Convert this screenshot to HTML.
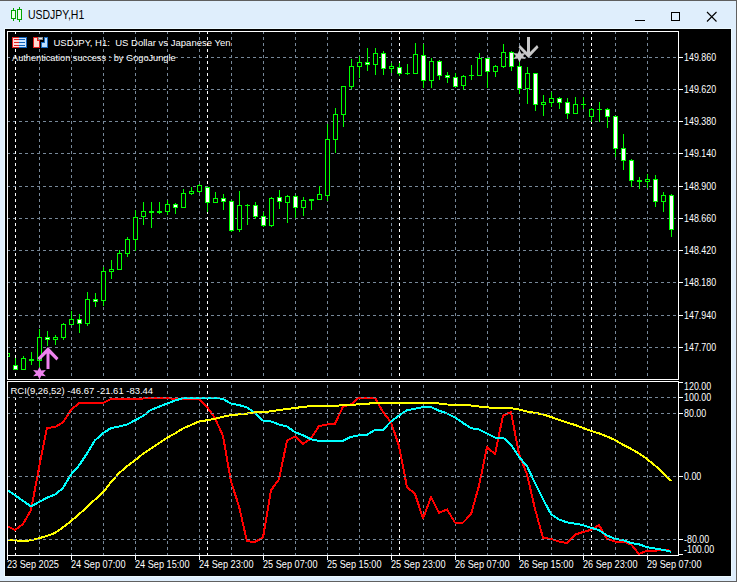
<!DOCTYPE html>
<html><head><meta charset="utf-8"><style>
html,body{margin:0;padding:0;}
body{width:737px;height:582px;overflow:hidden;background:#dfeefc;position:relative;font-family:"Liberation Sans",sans-serif;}
#tb{position:absolute;left:0;top:0;width:737px;height:1px;background:#5e5e5e;}
#rb{position:absolute;right:0;top:0;width:1px;height:582px;background:#606060;}
#bb{position:absolute;left:0;bottom:0;width:737px;height:1px;background:#606060;}
#title{position:absolute;left:28px;top:8px;font-size:12.4px;color:#000;white-space:nowrap;transform-origin:0 0;transform:scaleX(0.845);}
svg{position:absolute;left:0;top:0;}
.ax text{font-family:"Liberation Sans",sans-serif;font-size:10px;fill:#fff;}
.ax .hd text{font-size:9.8px;}
</style></head><body>
<div id="tb"></div><div id="rb"></div><div id="bb"></div>
<svg width="737" height="582" viewBox="0 0 737 582">
<defs>
<clipPath id="cm"><rect x="8" y="32" width="670" height="347"/></clipPath>
<clipPath id="ci"><rect x="8" y="382" width="670" height="173"/></clipPath>
</defs>
<!-- title icon -->
<g shape-rendering="crispEdges">
<rect x="13" y="8" width="1" height="13" fill="#00a400"/>
<rect x="19" y="7" width="1" height="15" fill="#00a400"/>
<rect x="11.5" y="10.5" width="4" height="8" fill="#e8ffe8" stroke="#00a400" stroke-width="1"/>
<rect x="17.5" y="9.5" width="4" height="10" fill="#e8ffe8" stroke="#00a400" stroke-width="1"/>
</g>
<g shape-rendering="crispEdges">
<rect x="4" y="28" width="728" height="549" fill="#ecf9ff"/>
<rect x="5" y="29" width="726" height="547" fill="#000"/>
</g>
<g shape-rendering="crispEdges" style="display:inline">
<path d="M7 57.5H10M13 57.5H16M19 57.5H22M25 57.5H28M31 57.5H34M37 57.5H40M43 57.5H46M49 57.5H52M55 57.5H58M61 57.5H64M67 57.5H70M73 57.5H76M79 57.5H82M85 57.5H88M91 57.5H94M97 57.5H100M103 57.5H106M109 57.5H112M115 57.5H118M121 57.5H124M127 57.5H130M133 57.5H136M139 57.5H142M145 57.5H148M151 57.5H154M157 57.5H160M163 57.5H166M169 57.5H172M175 57.5H178M181 57.5H184M187 57.5H190M193 57.5H196M199 57.5H202M205 57.5H208M211 57.5H214M217 57.5H220M223 57.5H226M229 57.5H232M235 57.5H238M241 57.5H244M247 57.5H250M253 57.5H256M259 57.5H262M265 57.5H268M271 57.5H274M277 57.5H280M283 57.5H286M289 57.5H292M295 57.5H298M301 57.5H304M307 57.5H310M313 57.5H316M319 57.5H322M325 57.5H328M331 57.5H334M337 57.5H340M343 57.5H346M349 57.5H352M355 57.5H358M361 57.5H364M367 57.5H370M373 57.5H376M379 57.5H382M385 57.5H388M391 57.5H394M397 57.5H400M403 57.5H406M409 57.5H412M415 57.5H418M421 57.5H424M427 57.5H430M433 57.5H436M439 57.5H442M445 57.5H448M451 57.5H454M457 57.5H460M463 57.5H466M469 57.5H472M475 57.5H478M481 57.5H484M487 57.5H490M493 57.5H496M499 57.5H502M505 57.5H508M511 57.5H514M517 57.5H520M523 57.5H526M529 57.5H532M535 57.5H538M541 57.5H544M547 57.5H550M553 57.5H556M559 57.5H562M565 57.5H568M571 57.5H574M577 57.5H580M583 57.5H586M589 57.5H592M595 57.5H598M601 57.5H604M607 57.5H610M613 57.5H616M619 57.5H622M625 57.5H628M631 57.5H634M637 57.5H640M643 57.5H646M649 57.5H652M655 57.5H658M661 57.5H664M667 57.5H670M673 57.5H676" stroke="#778899" stroke-width="1" fill="none"/>
<path d="M7 89.5H10M13 89.5H16M19 89.5H22M25 89.5H28M31 89.5H34M37 89.5H40M43 89.5H46M49 89.5H52M55 89.5H58M61 89.5H64M67 89.5H70M73 89.5H76M79 89.5H82M85 89.5H88M91 89.5H94M97 89.5H100M103 89.5H106M109 89.5H112M115 89.5H118M121 89.5H124M127 89.5H130M133 89.5H136M139 89.5H142M145 89.5H148M151 89.5H154M157 89.5H160M163 89.5H166M169 89.5H172M175 89.5H178M181 89.5H184M187 89.5H190M193 89.5H196M199 89.5H202M205 89.5H208M211 89.5H214M217 89.5H220M223 89.5H226M229 89.5H232M235 89.5H238M241 89.5H244M247 89.5H250M253 89.5H256M259 89.5H262M265 89.5H268M271 89.5H274M277 89.5H280M283 89.5H286M289 89.5H292M295 89.5H298M301 89.5H304M307 89.5H310M313 89.5H316M319 89.5H322M325 89.5H328M331 89.5H334M337 89.5H340M343 89.5H346M349 89.5H352M355 89.5H358M361 89.5H364M367 89.5H370M373 89.5H376M379 89.5H382M385 89.5H388M391 89.5H394M397 89.5H400M403 89.5H406M409 89.5H412M415 89.5H418M421 89.5H424M427 89.5H430M433 89.5H436M439 89.5H442M445 89.5H448M451 89.5H454M457 89.5H460M463 89.5H466M469 89.5H472M475 89.5H478M481 89.5H484M487 89.5H490M493 89.5H496M499 89.5H502M505 89.5H508M511 89.5H514M517 89.5H520M523 89.5H526M529 89.5H532M535 89.5H538M541 89.5H544M547 89.5H550M553 89.5H556M559 89.5H562M565 89.5H568M571 89.5H574M577 89.5H580M583 89.5H586M589 89.5H592M595 89.5H598M601 89.5H604M607 89.5H610M613 89.5H616M619 89.5H622M625 89.5H628M631 89.5H634M637 89.5H640M643 89.5H646M649 89.5H652M655 89.5H658M661 89.5H664M667 89.5H670M673 89.5H676" stroke="#778899" stroke-width="1" fill="none"/>
<path d="M7 121.5H10M13 121.5H16M19 121.5H22M25 121.5H28M31 121.5H34M37 121.5H40M43 121.5H46M49 121.5H52M55 121.5H58M61 121.5H64M67 121.5H70M73 121.5H76M79 121.5H82M85 121.5H88M91 121.5H94M97 121.5H100M103 121.5H106M109 121.5H112M115 121.5H118M121 121.5H124M127 121.5H130M133 121.5H136M139 121.5H142M145 121.5H148M151 121.5H154M157 121.5H160M163 121.5H166M169 121.5H172M175 121.5H178M181 121.5H184M187 121.5H190M193 121.5H196M199 121.5H202M205 121.5H208M211 121.5H214M217 121.5H220M223 121.5H226M229 121.5H232M235 121.5H238M241 121.5H244M247 121.5H250M253 121.5H256M259 121.5H262M265 121.5H268M271 121.5H274M277 121.5H280M283 121.5H286M289 121.5H292M295 121.5H298M301 121.5H304M307 121.5H310M313 121.5H316M319 121.5H322M325 121.5H328M331 121.5H334M337 121.5H340M343 121.5H346M349 121.5H352M355 121.5H358M361 121.5H364M367 121.5H370M373 121.5H376M379 121.5H382M385 121.5H388M391 121.5H394M397 121.5H400M403 121.5H406M409 121.5H412M415 121.5H418M421 121.5H424M427 121.5H430M433 121.5H436M439 121.5H442M445 121.5H448M451 121.5H454M457 121.5H460M463 121.5H466M469 121.5H472M475 121.5H478M481 121.5H484M487 121.5H490M493 121.5H496M499 121.5H502M505 121.5H508M511 121.5H514M517 121.5H520M523 121.5H526M529 121.5H532M535 121.5H538M541 121.5H544M547 121.5H550M553 121.5H556M559 121.5H562M565 121.5H568M571 121.5H574M577 121.5H580M583 121.5H586M589 121.5H592M595 121.5H598M601 121.5H604M607 121.5H610M613 121.5H616M619 121.5H622M625 121.5H628M631 121.5H634M637 121.5H640M643 121.5H646M649 121.5H652M655 121.5H658M661 121.5H664M667 121.5H670M673 121.5H676" stroke="#778899" stroke-width="1" fill="none"/>
<path d="M7 153.5H10M13 153.5H16M19 153.5H22M25 153.5H28M31 153.5H34M37 153.5H40M43 153.5H46M49 153.5H52M55 153.5H58M61 153.5H64M67 153.5H70M73 153.5H76M79 153.5H82M85 153.5H88M91 153.5H94M97 153.5H100M103 153.5H106M109 153.5H112M115 153.5H118M121 153.5H124M127 153.5H130M133 153.5H136M139 153.5H142M145 153.5H148M151 153.5H154M157 153.5H160M163 153.5H166M169 153.5H172M175 153.5H178M181 153.5H184M187 153.5H190M193 153.5H196M199 153.5H202M205 153.5H208M211 153.5H214M217 153.5H220M223 153.5H226M229 153.5H232M235 153.5H238M241 153.5H244M247 153.5H250M253 153.5H256M259 153.5H262M265 153.5H268M271 153.5H274M277 153.5H280M283 153.5H286M289 153.5H292M295 153.5H298M301 153.5H304M307 153.5H310M313 153.5H316M319 153.5H322M325 153.5H328M331 153.5H334M337 153.5H340M343 153.5H346M349 153.5H352M355 153.5H358M361 153.5H364M367 153.5H370M373 153.5H376M379 153.5H382M385 153.5H388M391 153.5H394M397 153.5H400M403 153.5H406M409 153.5H412M415 153.5H418M421 153.5H424M427 153.5H430M433 153.5H436M439 153.5H442M445 153.5H448M451 153.5H454M457 153.5H460M463 153.5H466M469 153.5H472M475 153.5H478M481 153.5H484M487 153.5H490M493 153.5H496M499 153.5H502M505 153.5H508M511 153.5H514M517 153.5H520M523 153.5H526M529 153.5H532M535 153.5H538M541 153.5H544M547 153.5H550M553 153.5H556M559 153.5H562M565 153.5H568M571 153.5H574M577 153.5H580M583 153.5H586M589 153.5H592M595 153.5H598M601 153.5H604M607 153.5H610M613 153.5H616M619 153.5H622M625 153.5H628M631 153.5H634M637 153.5H640M643 153.5H646M649 153.5H652M655 153.5H658M661 153.5H664M667 153.5H670M673 153.5H676" stroke="#778899" stroke-width="1" fill="none"/>
<path d="M7 186.5H10M13 186.5H16M19 186.5H22M25 186.5H28M31 186.5H34M37 186.5H40M43 186.5H46M49 186.5H52M55 186.5H58M61 186.5H64M67 186.5H70M73 186.5H76M79 186.5H82M85 186.5H88M91 186.5H94M97 186.5H100M103 186.5H106M109 186.5H112M115 186.5H118M121 186.5H124M127 186.5H130M133 186.5H136M139 186.5H142M145 186.5H148M151 186.5H154M157 186.5H160M163 186.5H166M169 186.5H172M175 186.5H178M181 186.5H184M187 186.5H190M193 186.5H196M199 186.5H202M205 186.5H208M211 186.5H214M217 186.5H220M223 186.5H226M229 186.5H232M235 186.5H238M241 186.5H244M247 186.5H250M253 186.5H256M259 186.5H262M265 186.5H268M271 186.5H274M277 186.5H280M283 186.5H286M289 186.5H292M295 186.5H298M301 186.5H304M307 186.5H310M313 186.5H316M319 186.5H322M325 186.5H328M331 186.5H334M337 186.5H340M343 186.5H346M349 186.5H352M355 186.5H358M361 186.5H364M367 186.5H370M373 186.5H376M379 186.5H382M385 186.5H388M391 186.5H394M397 186.5H400M403 186.5H406M409 186.5H412M415 186.5H418M421 186.5H424M427 186.5H430M433 186.5H436M439 186.5H442M445 186.5H448M451 186.5H454M457 186.5H460M463 186.5H466M469 186.5H472M475 186.5H478M481 186.5H484M487 186.5H490M493 186.5H496M499 186.5H502M505 186.5H508M511 186.5H514M517 186.5H520M523 186.5H526M529 186.5H532M535 186.5H538M541 186.5H544M547 186.5H550M553 186.5H556M559 186.5H562M565 186.5H568M571 186.5H574M577 186.5H580M583 186.5H586M589 186.5H592M595 186.5H598M601 186.5H604M607 186.5H610M613 186.5H616M619 186.5H622M625 186.5H628M631 186.5H634M637 186.5H640M643 186.5H646M649 186.5H652M655 186.5H658M661 186.5H664M667 186.5H670M673 186.5H676" stroke="#778899" stroke-width="1" fill="none"/>
<path d="M7 218.5H10M13 218.5H16M19 218.5H22M25 218.5H28M31 218.5H34M37 218.5H40M43 218.5H46M49 218.5H52M55 218.5H58M61 218.5H64M67 218.5H70M73 218.5H76M79 218.5H82M85 218.5H88M91 218.5H94M97 218.5H100M103 218.5H106M109 218.5H112M115 218.5H118M121 218.5H124M127 218.5H130M133 218.5H136M139 218.5H142M145 218.5H148M151 218.5H154M157 218.5H160M163 218.5H166M169 218.5H172M175 218.5H178M181 218.5H184M187 218.5H190M193 218.5H196M199 218.5H202M205 218.5H208M211 218.5H214M217 218.5H220M223 218.5H226M229 218.5H232M235 218.5H238M241 218.5H244M247 218.5H250M253 218.5H256M259 218.5H262M265 218.5H268M271 218.5H274M277 218.5H280M283 218.5H286M289 218.5H292M295 218.5H298M301 218.5H304M307 218.5H310M313 218.5H316M319 218.5H322M325 218.5H328M331 218.5H334M337 218.5H340M343 218.5H346M349 218.5H352M355 218.5H358M361 218.5H364M367 218.5H370M373 218.5H376M379 218.5H382M385 218.5H388M391 218.5H394M397 218.5H400M403 218.5H406M409 218.5H412M415 218.5H418M421 218.5H424M427 218.5H430M433 218.5H436M439 218.5H442M445 218.5H448M451 218.5H454M457 218.5H460M463 218.5H466M469 218.5H472M475 218.5H478M481 218.5H484M487 218.5H490M493 218.5H496M499 218.5H502M505 218.5H508M511 218.5H514M517 218.5H520M523 218.5H526M529 218.5H532M535 218.5H538M541 218.5H544M547 218.5H550M553 218.5H556M559 218.5H562M565 218.5H568M571 218.5H574M577 218.5H580M583 218.5H586M589 218.5H592M595 218.5H598M601 218.5H604M607 218.5H610M613 218.5H616M619 218.5H622M625 218.5H628M631 218.5H634M637 218.5H640M643 218.5H646M649 218.5H652M655 218.5H658M661 218.5H664M667 218.5H670M673 218.5H676" stroke="#778899" stroke-width="1" fill="none"/>
<path d="M7 250.5H10M13 250.5H16M19 250.5H22M25 250.5H28M31 250.5H34M37 250.5H40M43 250.5H46M49 250.5H52M55 250.5H58M61 250.5H64M67 250.5H70M73 250.5H76M79 250.5H82M85 250.5H88M91 250.5H94M97 250.5H100M103 250.5H106M109 250.5H112M115 250.5H118M121 250.5H124M127 250.5H130M133 250.5H136M139 250.5H142M145 250.5H148M151 250.5H154M157 250.5H160M163 250.5H166M169 250.5H172M175 250.5H178M181 250.5H184M187 250.5H190M193 250.5H196M199 250.5H202M205 250.5H208M211 250.5H214M217 250.5H220M223 250.5H226M229 250.5H232M235 250.5H238M241 250.5H244M247 250.5H250M253 250.5H256M259 250.5H262M265 250.5H268M271 250.5H274M277 250.5H280M283 250.5H286M289 250.5H292M295 250.5H298M301 250.5H304M307 250.5H310M313 250.5H316M319 250.5H322M325 250.5H328M331 250.5H334M337 250.5H340M343 250.5H346M349 250.5H352M355 250.5H358M361 250.5H364M367 250.5H370M373 250.5H376M379 250.5H382M385 250.5H388M391 250.5H394M397 250.5H400M403 250.5H406M409 250.5H412M415 250.5H418M421 250.5H424M427 250.5H430M433 250.5H436M439 250.5H442M445 250.5H448M451 250.5H454M457 250.5H460M463 250.5H466M469 250.5H472M475 250.5H478M481 250.5H484M487 250.5H490M493 250.5H496M499 250.5H502M505 250.5H508M511 250.5H514M517 250.5H520M523 250.5H526M529 250.5H532M535 250.5H538M541 250.5H544M547 250.5H550M553 250.5H556M559 250.5H562M565 250.5H568M571 250.5H574M577 250.5H580M583 250.5H586M589 250.5H592M595 250.5H598M601 250.5H604M607 250.5H610M613 250.5H616M619 250.5H622M625 250.5H628M631 250.5H634M637 250.5H640M643 250.5H646M649 250.5H652M655 250.5H658M661 250.5H664M667 250.5H670M673 250.5H676" stroke="#778899" stroke-width="1" fill="none"/>
<path d="M7 282.5H10M13 282.5H16M19 282.5H22M25 282.5H28M31 282.5H34M37 282.5H40M43 282.5H46M49 282.5H52M55 282.5H58M61 282.5H64M67 282.5H70M73 282.5H76M79 282.5H82M85 282.5H88M91 282.5H94M97 282.5H100M103 282.5H106M109 282.5H112M115 282.5H118M121 282.5H124M127 282.5H130M133 282.5H136M139 282.5H142M145 282.5H148M151 282.5H154M157 282.5H160M163 282.5H166M169 282.5H172M175 282.5H178M181 282.5H184M187 282.5H190M193 282.5H196M199 282.5H202M205 282.5H208M211 282.5H214M217 282.5H220M223 282.5H226M229 282.5H232M235 282.5H238M241 282.5H244M247 282.5H250M253 282.5H256M259 282.5H262M265 282.5H268M271 282.5H274M277 282.5H280M283 282.5H286M289 282.5H292M295 282.5H298M301 282.5H304M307 282.5H310M313 282.5H316M319 282.5H322M325 282.5H328M331 282.5H334M337 282.5H340M343 282.5H346M349 282.5H352M355 282.5H358M361 282.5H364M367 282.5H370M373 282.5H376M379 282.5H382M385 282.5H388M391 282.5H394M397 282.5H400M403 282.5H406M409 282.5H412M415 282.5H418M421 282.5H424M427 282.5H430M433 282.5H436M439 282.5H442M445 282.5H448M451 282.5H454M457 282.5H460M463 282.5H466M469 282.5H472M475 282.5H478M481 282.5H484M487 282.5H490M493 282.5H496M499 282.5H502M505 282.5H508M511 282.5H514M517 282.5H520M523 282.5H526M529 282.5H532M535 282.5H538M541 282.5H544M547 282.5H550M553 282.5H556M559 282.5H562M565 282.5H568M571 282.5H574M577 282.5H580M583 282.5H586M589 282.5H592M595 282.5H598M601 282.5H604M607 282.5H610M613 282.5H616M619 282.5H622M625 282.5H628M631 282.5H634M637 282.5H640M643 282.5H646M649 282.5H652M655 282.5H658M661 282.5H664M667 282.5H670M673 282.5H676" stroke="#778899" stroke-width="1" fill="none"/>
<path d="M7 315.5H10M13 315.5H16M19 315.5H22M25 315.5H28M31 315.5H34M37 315.5H40M43 315.5H46M49 315.5H52M55 315.5H58M61 315.5H64M67 315.5H70M73 315.5H76M79 315.5H82M85 315.5H88M91 315.5H94M97 315.5H100M103 315.5H106M109 315.5H112M115 315.5H118M121 315.5H124M127 315.5H130M133 315.5H136M139 315.5H142M145 315.5H148M151 315.5H154M157 315.5H160M163 315.5H166M169 315.5H172M175 315.5H178M181 315.5H184M187 315.5H190M193 315.5H196M199 315.5H202M205 315.5H208M211 315.5H214M217 315.5H220M223 315.5H226M229 315.5H232M235 315.5H238M241 315.5H244M247 315.5H250M253 315.5H256M259 315.5H262M265 315.5H268M271 315.5H274M277 315.5H280M283 315.5H286M289 315.5H292M295 315.5H298M301 315.5H304M307 315.5H310M313 315.5H316M319 315.5H322M325 315.5H328M331 315.5H334M337 315.5H340M343 315.5H346M349 315.5H352M355 315.5H358M361 315.5H364M367 315.5H370M373 315.5H376M379 315.5H382M385 315.5H388M391 315.5H394M397 315.5H400M403 315.5H406M409 315.5H412M415 315.5H418M421 315.5H424M427 315.5H430M433 315.5H436M439 315.5H442M445 315.5H448M451 315.5H454M457 315.5H460M463 315.5H466M469 315.5H472M475 315.5H478M481 315.5H484M487 315.5H490M493 315.5H496M499 315.5H502M505 315.5H508M511 315.5H514M517 315.5H520M523 315.5H526M529 315.5H532M535 315.5H538M541 315.5H544M547 315.5H550M553 315.5H556M559 315.5H562M565 315.5H568M571 315.5H574M577 315.5H580M583 315.5H586M589 315.5H592M595 315.5H598M601 315.5H604M607 315.5H610M613 315.5H616M619 315.5H622M625 315.5H628M631 315.5H634M637 315.5H640M643 315.5H646M649 315.5H652M655 315.5H658M661 315.5H664M667 315.5H670M673 315.5H676" stroke="#778899" stroke-width="1" fill="none"/>
<path d="M7 347.5H10M13 347.5H16M19 347.5H22M25 347.5H28M31 347.5H34M37 347.5H40M43 347.5H46M49 347.5H52M55 347.5H58M61 347.5H64M67 347.5H70M73 347.5H76M79 347.5H82M85 347.5H88M91 347.5H94M97 347.5H100M103 347.5H106M109 347.5H112M115 347.5H118M121 347.5H124M127 347.5H130M133 347.5H136M139 347.5H142M145 347.5H148M151 347.5H154M157 347.5H160M163 347.5H166M169 347.5H172M175 347.5H178M181 347.5H184M187 347.5H190M193 347.5H196M199 347.5H202M205 347.5H208M211 347.5H214M217 347.5H220M223 347.5H226M229 347.5H232M235 347.5H238M241 347.5H244M247 347.5H250M253 347.5H256M259 347.5H262M265 347.5H268M271 347.5H274M277 347.5H280M283 347.5H286M289 347.5H292M295 347.5H298M301 347.5H304M307 347.5H310M313 347.5H316M319 347.5H322M325 347.5H328M331 347.5H334M337 347.5H340M343 347.5H346M349 347.5H352M355 347.5H358M361 347.5H364M367 347.5H370M373 347.5H376M379 347.5H382M385 347.5H388M391 347.5H394M397 347.5H400M403 347.5H406M409 347.5H412M415 347.5H418M421 347.5H424M427 347.5H430M433 347.5H436M439 347.5H442M445 347.5H448M451 347.5H454M457 347.5H460M463 347.5H466M469 347.5H472M475 347.5H478M481 347.5H484M487 347.5H490M493 347.5H496M499 347.5H502M505 347.5H508M511 347.5H514M517 347.5H520M523 347.5H526M529 347.5H532M535 347.5H538M541 347.5H544M547 347.5H550M553 347.5H556M559 347.5H562M565 347.5H568M571 347.5H574M577 347.5H580M583 347.5H586M589 347.5H592M595 347.5H598M601 347.5H604M607 347.5H610M613 347.5H616M619 347.5H622M625 347.5H628M631 347.5H634M637 347.5H640M643 347.5H646M649 347.5H652M655 347.5H658M661 347.5H664M667 347.5H670M673 347.5H676" stroke="#778899" stroke-width="1" fill="none"/>
<path d="M39.5 31V34M39.5 37V40M39.5 43V46M39.5 49V52M39.5 55V58M39.5 61V64M39.5 67V70M39.5 73V76M39.5 79V82M39.5 85V88M39.5 91V94M39.5 97V100M39.5 103V106M39.5 109V112M39.5 115V118M39.5 121V124M39.5 127V130M39.5 133V136M39.5 139V142M39.5 145V148M39.5 151V154M39.5 157V160M39.5 163V166M39.5 169V172M39.5 175V178M39.5 181V184M39.5 187V190M39.5 193V196M39.5 199V202M39.5 205V208M39.5 211V214M39.5 217V220M39.5 223V226M39.5 229V232M39.5 235V238M39.5 241V244M39.5 247V250M39.5 253V256M39.5 259V262M39.5 265V268M39.5 271V274M39.5 277V280M39.5 283V286M39.5 289V292M39.5 295V298M39.5 301V304M39.5 307V310M39.5 313V316M39.5 319V322M39.5 325V328M39.5 331V334M39.5 337V340M39.5 343V346M39.5 349V352M39.5 355V358M39.5 361V364M39.5 367V370M39.5 373V376" stroke="#778899" stroke-width="1" fill="none"/>
<path d="M39.5 381V382M39.5 385V388M39.5 391V394M39.5 397V400M39.5 403V406M39.5 409V412M39.5 415V418M39.5 421V424M39.5 427V430M39.5 433V436M39.5 439V442M39.5 445V448M39.5 451V454M39.5 457V460M39.5 463V466M39.5 469V472M39.5 475V478M39.5 481V484M39.5 487V490M39.5 493V496M39.5 499V502M39.5 505V508M39.5 511V514M39.5 517V520M39.5 523V526M39.5 529V532M39.5 535V538M39.5 541V544M39.5 547V550M39.5 553V555" stroke="#778899" stroke-width="1" fill="none"/>
<path d="M71.5 31V34M71.5 37V40M71.5 43V46M71.5 49V52M71.5 55V58M71.5 61V64M71.5 67V70M71.5 73V76M71.5 79V82M71.5 85V88M71.5 91V94M71.5 97V100M71.5 103V106M71.5 109V112M71.5 115V118M71.5 121V124M71.5 127V130M71.5 133V136M71.5 139V142M71.5 145V148M71.5 151V154M71.5 157V160M71.5 163V166M71.5 169V172M71.5 175V178M71.5 181V184M71.5 187V190M71.5 193V196M71.5 199V202M71.5 205V208M71.5 211V214M71.5 217V220M71.5 223V226M71.5 229V232M71.5 235V238M71.5 241V244M71.5 247V250M71.5 253V256M71.5 259V262M71.5 265V268M71.5 271V274M71.5 277V280M71.5 283V286M71.5 289V292M71.5 295V298M71.5 301V304M71.5 307V310M71.5 313V316M71.5 319V322M71.5 325V328M71.5 331V334M71.5 337V340M71.5 343V346M71.5 349V352M71.5 355V358M71.5 361V364M71.5 367V370M71.5 373V376" stroke="#778899" stroke-width="1" fill="none"/>
<path d="M71.5 381V382M71.5 385V388M71.5 391V394M71.5 397V400M71.5 403V406M71.5 409V412M71.5 415V418M71.5 421V424M71.5 427V430M71.5 433V436M71.5 439V442M71.5 445V448M71.5 451V454M71.5 457V460M71.5 463V466M71.5 469V472M71.5 475V478M71.5 481V484M71.5 487V490M71.5 493V496M71.5 499V502M71.5 505V508M71.5 511V514M71.5 517V520M71.5 523V526M71.5 529V532M71.5 535V538M71.5 541V544M71.5 547V550M71.5 553V555" stroke="#778899" stroke-width="1" fill="none"/>
<path d="M103.5 31V34M103.5 37V40M103.5 43V46M103.5 49V52M103.5 55V58M103.5 61V64M103.5 67V70M103.5 73V76M103.5 79V82M103.5 85V88M103.5 91V94M103.5 97V100M103.5 103V106M103.5 109V112M103.5 115V118M103.5 121V124M103.5 127V130M103.5 133V136M103.5 139V142M103.5 145V148M103.5 151V154M103.5 157V160M103.5 163V166M103.5 169V172M103.5 175V178M103.5 181V184M103.5 187V190M103.5 193V196M103.5 199V202M103.5 205V208M103.5 211V214M103.5 217V220M103.5 223V226M103.5 229V232M103.5 235V238M103.5 241V244M103.5 247V250M103.5 253V256M103.5 259V262M103.5 265V268M103.5 271V274M103.5 277V280M103.5 283V286M103.5 289V292M103.5 295V298M103.5 301V304M103.5 307V310M103.5 313V316M103.5 319V322M103.5 325V328M103.5 331V334M103.5 337V340M103.5 343V346M103.5 349V352M103.5 355V358M103.5 361V364M103.5 367V370M103.5 373V376" stroke="#778899" stroke-width="1" fill="none"/>
<path d="M103.5 381V382M103.5 385V388M103.5 391V394M103.5 397V400M103.5 403V406M103.5 409V412M103.5 415V418M103.5 421V424M103.5 427V430M103.5 433V436M103.5 439V442M103.5 445V448M103.5 451V454M103.5 457V460M103.5 463V466M103.5 469V472M103.5 475V478M103.5 481V484M103.5 487V490M103.5 493V496M103.5 499V502M103.5 505V508M103.5 511V514M103.5 517V520M103.5 523V526M103.5 529V532M103.5 535V538M103.5 541V544M103.5 547V550M103.5 553V555" stroke="#778899" stroke-width="1" fill="none"/>
<path d="M135.5 31V34M135.5 37V40M135.5 43V46M135.5 49V52M135.5 55V58M135.5 61V64M135.5 67V70M135.5 73V76M135.5 79V82M135.5 85V88M135.5 91V94M135.5 97V100M135.5 103V106M135.5 109V112M135.5 115V118M135.5 121V124M135.5 127V130M135.5 133V136M135.5 139V142M135.5 145V148M135.5 151V154M135.5 157V160M135.5 163V166M135.5 169V172M135.5 175V178M135.5 181V184M135.5 187V190M135.5 193V196M135.5 199V202M135.5 205V208M135.5 211V214M135.5 217V220M135.5 223V226M135.5 229V232M135.5 235V238M135.5 241V244M135.5 247V250M135.5 253V256M135.5 259V262M135.5 265V268M135.5 271V274M135.5 277V280M135.5 283V286M135.5 289V292M135.5 295V298M135.5 301V304M135.5 307V310M135.5 313V316M135.5 319V322M135.5 325V328M135.5 331V334M135.5 337V340M135.5 343V346M135.5 349V352M135.5 355V358M135.5 361V364M135.5 367V370M135.5 373V376" stroke="#778899" stroke-width="1" fill="none"/>
<path d="M135.5 381V382M135.5 385V388M135.5 391V394M135.5 397V400M135.5 403V406M135.5 409V412M135.5 415V418M135.5 421V424M135.5 427V430M135.5 433V436M135.5 439V442M135.5 445V448M135.5 451V454M135.5 457V460M135.5 463V466M135.5 469V472M135.5 475V478M135.5 481V484M135.5 487V490M135.5 493V496M135.5 499V502M135.5 505V508M135.5 511V514M135.5 517V520M135.5 523V526M135.5 529V532M135.5 535V538M135.5 541V544M135.5 547V550M135.5 553V555" stroke="#778899" stroke-width="1" fill="none"/>
<path d="M167.5 31V34M167.5 37V40M167.5 43V46M167.5 49V52M167.5 55V58M167.5 61V64M167.5 67V70M167.5 73V76M167.5 79V82M167.5 85V88M167.5 91V94M167.5 97V100M167.5 103V106M167.5 109V112M167.5 115V118M167.5 121V124M167.5 127V130M167.5 133V136M167.5 139V142M167.5 145V148M167.5 151V154M167.5 157V160M167.5 163V166M167.5 169V172M167.5 175V178M167.5 181V184M167.5 187V190M167.5 193V196M167.5 199V202M167.5 205V208M167.5 211V214M167.5 217V220M167.5 223V226M167.5 229V232M167.5 235V238M167.5 241V244M167.5 247V250M167.5 253V256M167.5 259V262M167.5 265V268M167.5 271V274M167.5 277V280M167.5 283V286M167.5 289V292M167.5 295V298M167.5 301V304M167.5 307V310M167.5 313V316M167.5 319V322M167.5 325V328M167.5 331V334M167.5 337V340M167.5 343V346M167.5 349V352M167.5 355V358M167.5 361V364M167.5 367V370M167.5 373V376" stroke="#778899" stroke-width="1" fill="none"/>
<path d="M167.5 381V382M167.5 385V388M167.5 391V394M167.5 397V400M167.5 403V406M167.5 409V412M167.5 415V418M167.5 421V424M167.5 427V430M167.5 433V436M167.5 439V442M167.5 445V448M167.5 451V454M167.5 457V460M167.5 463V466M167.5 469V472M167.5 475V478M167.5 481V484M167.5 487V490M167.5 493V496M167.5 499V502M167.5 505V508M167.5 511V514M167.5 517V520M167.5 523V526M167.5 529V532M167.5 535V538M167.5 541V544M167.5 547V550M167.5 553V555" stroke="#778899" stroke-width="1" fill="none"/>
<path d="M199.5 31V34M199.5 37V40M199.5 43V46M199.5 49V52M199.5 55V58M199.5 61V64M199.5 67V70M199.5 73V76M199.5 79V82M199.5 85V88M199.5 91V94M199.5 97V100M199.5 103V106M199.5 109V112M199.5 115V118M199.5 121V124M199.5 127V130M199.5 133V136M199.5 139V142M199.5 145V148M199.5 151V154M199.5 157V160M199.5 163V166M199.5 169V172M199.5 175V178M199.5 181V184M199.5 187V190M199.5 193V196M199.5 199V202M199.5 205V208M199.5 211V214M199.5 217V220M199.5 223V226M199.5 229V232M199.5 235V238M199.5 241V244M199.5 247V250M199.5 253V256M199.5 259V262M199.5 265V268M199.5 271V274M199.5 277V280M199.5 283V286M199.5 289V292M199.5 295V298M199.5 301V304M199.5 307V310M199.5 313V316M199.5 319V322M199.5 325V328M199.5 331V334M199.5 337V340M199.5 343V346M199.5 349V352M199.5 355V358M199.5 361V364M199.5 367V370M199.5 373V376" stroke="#778899" stroke-width="1" fill="none"/>
<path d="M199.5 381V382M199.5 385V388M199.5 391V394M199.5 397V400M199.5 403V406M199.5 409V412M199.5 415V418M199.5 421V424M199.5 427V430M199.5 433V436M199.5 439V442M199.5 445V448M199.5 451V454M199.5 457V460M199.5 463V466M199.5 469V472M199.5 475V478M199.5 481V484M199.5 487V490M199.5 493V496M199.5 499V502M199.5 505V508M199.5 511V514M199.5 517V520M199.5 523V526M199.5 529V532M199.5 535V538M199.5 541V544M199.5 547V550M199.5 553V555" stroke="#778899" stroke-width="1" fill="none"/>
<path d="M231.5 31V34M231.5 37V40M231.5 43V46M231.5 49V52M231.5 55V58M231.5 61V64M231.5 67V70M231.5 73V76M231.5 79V82M231.5 85V88M231.5 91V94M231.5 97V100M231.5 103V106M231.5 109V112M231.5 115V118M231.5 121V124M231.5 127V130M231.5 133V136M231.5 139V142M231.5 145V148M231.5 151V154M231.5 157V160M231.5 163V166M231.5 169V172M231.5 175V178M231.5 181V184M231.5 187V190M231.5 193V196M231.5 199V202M231.5 205V208M231.5 211V214M231.5 217V220M231.5 223V226M231.5 229V232M231.5 235V238M231.5 241V244M231.5 247V250M231.5 253V256M231.5 259V262M231.5 265V268M231.5 271V274M231.5 277V280M231.5 283V286M231.5 289V292M231.5 295V298M231.5 301V304M231.5 307V310M231.5 313V316M231.5 319V322M231.5 325V328M231.5 331V334M231.5 337V340M231.5 343V346M231.5 349V352M231.5 355V358M231.5 361V364M231.5 367V370M231.5 373V376" stroke="#778899" stroke-width="1" fill="none"/>
<path d="M231.5 381V382M231.5 385V388M231.5 391V394M231.5 397V400M231.5 403V406M231.5 409V412M231.5 415V418M231.5 421V424M231.5 427V430M231.5 433V436M231.5 439V442M231.5 445V448M231.5 451V454M231.5 457V460M231.5 463V466M231.5 469V472M231.5 475V478M231.5 481V484M231.5 487V490M231.5 493V496M231.5 499V502M231.5 505V508M231.5 511V514M231.5 517V520M231.5 523V526M231.5 529V532M231.5 535V538M231.5 541V544M231.5 547V550M231.5 553V555" stroke="#778899" stroke-width="1" fill="none"/>
<path d="M263.5 31V34M263.5 37V40M263.5 43V46M263.5 49V52M263.5 55V58M263.5 61V64M263.5 67V70M263.5 73V76M263.5 79V82M263.5 85V88M263.5 91V94M263.5 97V100M263.5 103V106M263.5 109V112M263.5 115V118M263.5 121V124M263.5 127V130M263.5 133V136M263.5 139V142M263.5 145V148M263.5 151V154M263.5 157V160M263.5 163V166M263.5 169V172M263.5 175V178M263.5 181V184M263.5 187V190M263.5 193V196M263.5 199V202M263.5 205V208M263.5 211V214M263.5 217V220M263.5 223V226M263.5 229V232M263.5 235V238M263.5 241V244M263.5 247V250M263.5 253V256M263.5 259V262M263.5 265V268M263.5 271V274M263.5 277V280M263.5 283V286M263.5 289V292M263.5 295V298M263.5 301V304M263.5 307V310M263.5 313V316M263.5 319V322M263.5 325V328M263.5 331V334M263.5 337V340M263.5 343V346M263.5 349V352M263.5 355V358M263.5 361V364M263.5 367V370M263.5 373V376" stroke="#778899" stroke-width="1" fill="none"/>
<path d="M263.5 381V382M263.5 385V388M263.5 391V394M263.5 397V400M263.5 403V406M263.5 409V412M263.5 415V418M263.5 421V424M263.5 427V430M263.5 433V436M263.5 439V442M263.5 445V448M263.5 451V454M263.5 457V460M263.5 463V466M263.5 469V472M263.5 475V478M263.5 481V484M263.5 487V490M263.5 493V496M263.5 499V502M263.5 505V508M263.5 511V514M263.5 517V520M263.5 523V526M263.5 529V532M263.5 535V538M263.5 541V544M263.5 547V550M263.5 553V555" stroke="#778899" stroke-width="1" fill="none"/>
<path d="M295.5 31V34M295.5 37V40M295.5 43V46M295.5 49V52M295.5 55V58M295.5 61V64M295.5 67V70M295.5 73V76M295.5 79V82M295.5 85V88M295.5 91V94M295.5 97V100M295.5 103V106M295.5 109V112M295.5 115V118M295.5 121V124M295.5 127V130M295.5 133V136M295.5 139V142M295.5 145V148M295.5 151V154M295.5 157V160M295.5 163V166M295.5 169V172M295.5 175V178M295.5 181V184M295.5 187V190M295.5 193V196M295.5 199V202M295.5 205V208M295.5 211V214M295.5 217V220M295.5 223V226M295.5 229V232M295.5 235V238M295.5 241V244M295.5 247V250M295.5 253V256M295.5 259V262M295.5 265V268M295.5 271V274M295.5 277V280M295.5 283V286M295.5 289V292M295.5 295V298M295.5 301V304M295.5 307V310M295.5 313V316M295.5 319V322M295.5 325V328M295.5 331V334M295.5 337V340M295.5 343V346M295.5 349V352M295.5 355V358M295.5 361V364M295.5 367V370M295.5 373V376" stroke="#778899" stroke-width="1" fill="none"/>
<path d="M295.5 381V382M295.5 385V388M295.5 391V394M295.5 397V400M295.5 403V406M295.5 409V412M295.5 415V418M295.5 421V424M295.5 427V430M295.5 433V436M295.5 439V442M295.5 445V448M295.5 451V454M295.5 457V460M295.5 463V466M295.5 469V472M295.5 475V478M295.5 481V484M295.5 487V490M295.5 493V496M295.5 499V502M295.5 505V508M295.5 511V514M295.5 517V520M295.5 523V526M295.5 529V532M295.5 535V538M295.5 541V544M295.5 547V550M295.5 553V555" stroke="#778899" stroke-width="1" fill="none"/>
<path d="M327.5 31V34M327.5 37V40M327.5 43V46M327.5 49V52M327.5 55V58M327.5 61V64M327.5 67V70M327.5 73V76M327.5 79V82M327.5 85V88M327.5 91V94M327.5 97V100M327.5 103V106M327.5 109V112M327.5 115V118M327.5 121V124M327.5 127V130M327.5 133V136M327.5 139V142M327.5 145V148M327.5 151V154M327.5 157V160M327.5 163V166M327.5 169V172M327.5 175V178M327.5 181V184M327.5 187V190M327.5 193V196M327.5 199V202M327.5 205V208M327.5 211V214M327.5 217V220M327.5 223V226M327.5 229V232M327.5 235V238M327.5 241V244M327.5 247V250M327.5 253V256M327.5 259V262M327.5 265V268M327.5 271V274M327.5 277V280M327.5 283V286M327.5 289V292M327.5 295V298M327.5 301V304M327.5 307V310M327.5 313V316M327.5 319V322M327.5 325V328M327.5 331V334M327.5 337V340M327.5 343V346M327.5 349V352M327.5 355V358M327.5 361V364M327.5 367V370M327.5 373V376" stroke="#778899" stroke-width="1" fill="none"/>
<path d="M327.5 381V382M327.5 385V388M327.5 391V394M327.5 397V400M327.5 403V406M327.5 409V412M327.5 415V418M327.5 421V424M327.5 427V430M327.5 433V436M327.5 439V442M327.5 445V448M327.5 451V454M327.5 457V460M327.5 463V466M327.5 469V472M327.5 475V478M327.5 481V484M327.5 487V490M327.5 493V496M327.5 499V502M327.5 505V508M327.5 511V514M327.5 517V520M327.5 523V526M327.5 529V532M327.5 535V538M327.5 541V544M327.5 547V550M327.5 553V555" stroke="#778899" stroke-width="1" fill="none"/>
<path d="M359.5 31V34M359.5 37V40M359.5 43V46M359.5 49V52M359.5 55V58M359.5 61V64M359.5 67V70M359.5 73V76M359.5 79V82M359.5 85V88M359.5 91V94M359.5 97V100M359.5 103V106M359.5 109V112M359.5 115V118M359.5 121V124M359.5 127V130M359.5 133V136M359.5 139V142M359.5 145V148M359.5 151V154M359.5 157V160M359.5 163V166M359.5 169V172M359.5 175V178M359.5 181V184M359.5 187V190M359.5 193V196M359.5 199V202M359.5 205V208M359.5 211V214M359.5 217V220M359.5 223V226M359.5 229V232M359.5 235V238M359.5 241V244M359.5 247V250M359.5 253V256M359.5 259V262M359.5 265V268M359.5 271V274M359.5 277V280M359.5 283V286M359.5 289V292M359.5 295V298M359.5 301V304M359.5 307V310M359.5 313V316M359.5 319V322M359.5 325V328M359.5 331V334M359.5 337V340M359.5 343V346M359.5 349V352M359.5 355V358M359.5 361V364M359.5 367V370M359.5 373V376" stroke="#778899" stroke-width="1" fill="none"/>
<path d="M359.5 381V382M359.5 385V388M359.5 391V394M359.5 397V400M359.5 403V406M359.5 409V412M359.5 415V418M359.5 421V424M359.5 427V430M359.5 433V436M359.5 439V442M359.5 445V448M359.5 451V454M359.5 457V460M359.5 463V466M359.5 469V472M359.5 475V478M359.5 481V484M359.5 487V490M359.5 493V496M359.5 499V502M359.5 505V508M359.5 511V514M359.5 517V520M359.5 523V526M359.5 529V532M359.5 535V538M359.5 541V544M359.5 547V550M359.5 553V555" stroke="#778899" stroke-width="1" fill="none"/>
<path d="M391.5 31V34M391.5 37V40M391.5 43V46M391.5 49V52M391.5 55V58M391.5 61V64M391.5 67V70M391.5 73V76M391.5 79V82M391.5 85V88M391.5 91V94M391.5 97V100M391.5 103V106M391.5 109V112M391.5 115V118M391.5 121V124M391.5 127V130M391.5 133V136M391.5 139V142M391.5 145V148M391.5 151V154M391.5 157V160M391.5 163V166M391.5 169V172M391.5 175V178M391.5 181V184M391.5 187V190M391.5 193V196M391.5 199V202M391.5 205V208M391.5 211V214M391.5 217V220M391.5 223V226M391.5 229V232M391.5 235V238M391.5 241V244M391.5 247V250M391.5 253V256M391.5 259V262M391.5 265V268M391.5 271V274M391.5 277V280M391.5 283V286M391.5 289V292M391.5 295V298M391.5 301V304M391.5 307V310M391.5 313V316M391.5 319V322M391.5 325V328M391.5 331V334M391.5 337V340M391.5 343V346M391.5 349V352M391.5 355V358M391.5 361V364M391.5 367V370M391.5 373V376" stroke="#778899" stroke-width="1" fill="none"/>
<path d="M391.5 381V382M391.5 385V388M391.5 391V394M391.5 397V400M391.5 403V406M391.5 409V412M391.5 415V418M391.5 421V424M391.5 427V430M391.5 433V436M391.5 439V442M391.5 445V448M391.5 451V454M391.5 457V460M391.5 463V466M391.5 469V472M391.5 475V478M391.5 481V484M391.5 487V490M391.5 493V496M391.5 499V502M391.5 505V508M391.5 511V514M391.5 517V520M391.5 523V526M391.5 529V532M391.5 535V538M391.5 541V544M391.5 547V550M391.5 553V555" stroke="#778899" stroke-width="1" fill="none"/>
<path d="M423.5 31V34M423.5 37V40M423.5 43V46M423.5 49V52M423.5 55V58M423.5 61V64M423.5 67V70M423.5 73V76M423.5 79V82M423.5 85V88M423.5 91V94M423.5 97V100M423.5 103V106M423.5 109V112M423.5 115V118M423.5 121V124M423.5 127V130M423.5 133V136M423.5 139V142M423.5 145V148M423.5 151V154M423.5 157V160M423.5 163V166M423.5 169V172M423.5 175V178M423.5 181V184M423.5 187V190M423.5 193V196M423.5 199V202M423.5 205V208M423.5 211V214M423.5 217V220M423.5 223V226M423.5 229V232M423.5 235V238M423.5 241V244M423.5 247V250M423.5 253V256M423.5 259V262M423.5 265V268M423.5 271V274M423.5 277V280M423.5 283V286M423.5 289V292M423.5 295V298M423.5 301V304M423.5 307V310M423.5 313V316M423.5 319V322M423.5 325V328M423.5 331V334M423.5 337V340M423.5 343V346M423.5 349V352M423.5 355V358M423.5 361V364M423.5 367V370M423.5 373V376" stroke="#778899" stroke-width="1" fill="none"/>
<path d="M423.5 381V382M423.5 385V388M423.5 391V394M423.5 397V400M423.5 403V406M423.5 409V412M423.5 415V418M423.5 421V424M423.5 427V430M423.5 433V436M423.5 439V442M423.5 445V448M423.5 451V454M423.5 457V460M423.5 463V466M423.5 469V472M423.5 475V478M423.5 481V484M423.5 487V490M423.5 493V496M423.5 499V502M423.5 505V508M423.5 511V514M423.5 517V520M423.5 523V526M423.5 529V532M423.5 535V538M423.5 541V544M423.5 547V550M423.5 553V555" stroke="#778899" stroke-width="1" fill="none"/>
<path d="M455.5 31V34M455.5 37V40M455.5 43V46M455.5 49V52M455.5 55V58M455.5 61V64M455.5 67V70M455.5 73V76M455.5 79V82M455.5 85V88M455.5 91V94M455.5 97V100M455.5 103V106M455.5 109V112M455.5 115V118M455.5 121V124M455.5 127V130M455.5 133V136M455.5 139V142M455.5 145V148M455.5 151V154M455.5 157V160M455.5 163V166M455.5 169V172M455.5 175V178M455.5 181V184M455.5 187V190M455.5 193V196M455.5 199V202M455.5 205V208M455.5 211V214M455.5 217V220M455.5 223V226M455.5 229V232M455.5 235V238M455.5 241V244M455.5 247V250M455.5 253V256M455.5 259V262M455.5 265V268M455.5 271V274M455.5 277V280M455.5 283V286M455.5 289V292M455.5 295V298M455.5 301V304M455.5 307V310M455.5 313V316M455.5 319V322M455.5 325V328M455.5 331V334M455.5 337V340M455.5 343V346M455.5 349V352M455.5 355V358M455.5 361V364M455.5 367V370M455.5 373V376" stroke="#778899" stroke-width="1" fill="none"/>
<path d="M455.5 381V382M455.5 385V388M455.5 391V394M455.5 397V400M455.5 403V406M455.5 409V412M455.5 415V418M455.5 421V424M455.5 427V430M455.5 433V436M455.5 439V442M455.5 445V448M455.5 451V454M455.5 457V460M455.5 463V466M455.5 469V472M455.5 475V478M455.5 481V484M455.5 487V490M455.5 493V496M455.5 499V502M455.5 505V508M455.5 511V514M455.5 517V520M455.5 523V526M455.5 529V532M455.5 535V538M455.5 541V544M455.5 547V550M455.5 553V555" stroke="#778899" stroke-width="1" fill="none"/>
<path d="M487.5 31V34M487.5 37V40M487.5 43V46M487.5 49V52M487.5 55V58M487.5 61V64M487.5 67V70M487.5 73V76M487.5 79V82M487.5 85V88M487.5 91V94M487.5 97V100M487.5 103V106M487.5 109V112M487.5 115V118M487.5 121V124M487.5 127V130M487.5 133V136M487.5 139V142M487.5 145V148M487.5 151V154M487.5 157V160M487.5 163V166M487.5 169V172M487.5 175V178M487.5 181V184M487.5 187V190M487.5 193V196M487.5 199V202M487.5 205V208M487.5 211V214M487.5 217V220M487.5 223V226M487.5 229V232M487.5 235V238M487.5 241V244M487.5 247V250M487.5 253V256M487.5 259V262M487.5 265V268M487.5 271V274M487.5 277V280M487.5 283V286M487.5 289V292M487.5 295V298M487.5 301V304M487.5 307V310M487.5 313V316M487.5 319V322M487.5 325V328M487.5 331V334M487.5 337V340M487.5 343V346M487.5 349V352M487.5 355V358M487.5 361V364M487.5 367V370M487.5 373V376" stroke="#778899" stroke-width="1" fill="none"/>
<path d="M487.5 381V382M487.5 385V388M487.5 391V394M487.5 397V400M487.5 403V406M487.5 409V412M487.5 415V418M487.5 421V424M487.5 427V430M487.5 433V436M487.5 439V442M487.5 445V448M487.5 451V454M487.5 457V460M487.5 463V466M487.5 469V472M487.5 475V478M487.5 481V484M487.5 487V490M487.5 493V496M487.5 499V502M487.5 505V508M487.5 511V514M487.5 517V520M487.5 523V526M487.5 529V532M487.5 535V538M487.5 541V544M487.5 547V550M487.5 553V555" stroke="#778899" stroke-width="1" fill="none"/>
<path d="M519.5 31V34M519.5 37V40M519.5 43V46M519.5 49V52M519.5 55V58M519.5 61V64M519.5 67V70M519.5 73V76M519.5 79V82M519.5 85V88M519.5 91V94M519.5 97V100M519.5 103V106M519.5 109V112M519.5 115V118M519.5 121V124M519.5 127V130M519.5 133V136M519.5 139V142M519.5 145V148M519.5 151V154M519.5 157V160M519.5 163V166M519.5 169V172M519.5 175V178M519.5 181V184M519.5 187V190M519.5 193V196M519.5 199V202M519.5 205V208M519.5 211V214M519.5 217V220M519.5 223V226M519.5 229V232M519.5 235V238M519.5 241V244M519.5 247V250M519.5 253V256M519.5 259V262M519.5 265V268M519.5 271V274M519.5 277V280M519.5 283V286M519.5 289V292M519.5 295V298M519.5 301V304M519.5 307V310M519.5 313V316M519.5 319V322M519.5 325V328M519.5 331V334M519.5 337V340M519.5 343V346M519.5 349V352M519.5 355V358M519.5 361V364M519.5 367V370M519.5 373V376" stroke="#778899" stroke-width="1" fill="none"/>
<path d="M519.5 381V382M519.5 385V388M519.5 391V394M519.5 397V400M519.5 403V406M519.5 409V412M519.5 415V418M519.5 421V424M519.5 427V430M519.5 433V436M519.5 439V442M519.5 445V448M519.5 451V454M519.5 457V460M519.5 463V466M519.5 469V472M519.5 475V478M519.5 481V484M519.5 487V490M519.5 493V496M519.5 499V502M519.5 505V508M519.5 511V514M519.5 517V520M519.5 523V526M519.5 529V532M519.5 535V538M519.5 541V544M519.5 547V550M519.5 553V555" stroke="#778899" stroke-width="1" fill="none"/>
<path d="M551.5 31V34M551.5 37V40M551.5 43V46M551.5 49V52M551.5 55V58M551.5 61V64M551.5 67V70M551.5 73V76M551.5 79V82M551.5 85V88M551.5 91V94M551.5 97V100M551.5 103V106M551.5 109V112M551.5 115V118M551.5 121V124M551.5 127V130M551.5 133V136M551.5 139V142M551.5 145V148M551.5 151V154M551.5 157V160M551.5 163V166M551.5 169V172M551.5 175V178M551.5 181V184M551.5 187V190M551.5 193V196M551.5 199V202M551.5 205V208M551.5 211V214M551.5 217V220M551.5 223V226M551.5 229V232M551.5 235V238M551.5 241V244M551.5 247V250M551.5 253V256M551.5 259V262M551.5 265V268M551.5 271V274M551.5 277V280M551.5 283V286M551.5 289V292M551.5 295V298M551.5 301V304M551.5 307V310M551.5 313V316M551.5 319V322M551.5 325V328M551.5 331V334M551.5 337V340M551.5 343V346M551.5 349V352M551.5 355V358M551.5 361V364M551.5 367V370M551.5 373V376" stroke="#778899" stroke-width="1" fill="none"/>
<path d="M551.5 381V382M551.5 385V388M551.5 391V394M551.5 397V400M551.5 403V406M551.5 409V412M551.5 415V418M551.5 421V424M551.5 427V430M551.5 433V436M551.5 439V442M551.5 445V448M551.5 451V454M551.5 457V460M551.5 463V466M551.5 469V472M551.5 475V478M551.5 481V484M551.5 487V490M551.5 493V496M551.5 499V502M551.5 505V508M551.5 511V514M551.5 517V520M551.5 523V526M551.5 529V532M551.5 535V538M551.5 541V544M551.5 547V550M551.5 553V555" stroke="#778899" stroke-width="1" fill="none"/>
<path d="M583.5 31V34M583.5 37V40M583.5 43V46M583.5 49V52M583.5 55V58M583.5 61V64M583.5 67V70M583.5 73V76M583.5 79V82M583.5 85V88M583.5 91V94M583.5 97V100M583.5 103V106M583.5 109V112M583.5 115V118M583.5 121V124M583.5 127V130M583.5 133V136M583.5 139V142M583.5 145V148M583.5 151V154M583.5 157V160M583.5 163V166M583.5 169V172M583.5 175V178M583.5 181V184M583.5 187V190M583.5 193V196M583.5 199V202M583.5 205V208M583.5 211V214M583.5 217V220M583.5 223V226M583.5 229V232M583.5 235V238M583.5 241V244M583.5 247V250M583.5 253V256M583.5 259V262M583.5 265V268M583.5 271V274M583.5 277V280M583.5 283V286M583.5 289V292M583.5 295V298M583.5 301V304M583.5 307V310M583.5 313V316M583.5 319V322M583.5 325V328M583.5 331V334M583.5 337V340M583.5 343V346M583.5 349V352M583.5 355V358M583.5 361V364M583.5 367V370M583.5 373V376" stroke="#778899" stroke-width="1" fill="none"/>
<path d="M583.5 381V382M583.5 385V388M583.5 391V394M583.5 397V400M583.5 403V406M583.5 409V412M583.5 415V418M583.5 421V424M583.5 427V430M583.5 433V436M583.5 439V442M583.5 445V448M583.5 451V454M583.5 457V460M583.5 463V466M583.5 469V472M583.5 475V478M583.5 481V484M583.5 487V490M583.5 493V496M583.5 499V502M583.5 505V508M583.5 511V514M583.5 517V520M583.5 523V526M583.5 529V532M583.5 535V538M583.5 541V544M583.5 547V550M583.5 553V555" stroke="#778899" stroke-width="1" fill="none"/>
<path d="M615.5 31V34M615.5 37V40M615.5 43V46M615.5 49V52M615.5 55V58M615.5 61V64M615.5 67V70M615.5 73V76M615.5 79V82M615.5 85V88M615.5 91V94M615.5 97V100M615.5 103V106M615.5 109V112M615.5 115V118M615.5 121V124M615.5 127V130M615.5 133V136M615.5 139V142M615.5 145V148M615.5 151V154M615.5 157V160M615.5 163V166M615.5 169V172M615.5 175V178M615.5 181V184M615.5 187V190M615.5 193V196M615.5 199V202M615.5 205V208M615.5 211V214M615.5 217V220M615.5 223V226M615.5 229V232M615.5 235V238M615.5 241V244M615.5 247V250M615.5 253V256M615.5 259V262M615.5 265V268M615.5 271V274M615.5 277V280M615.5 283V286M615.5 289V292M615.5 295V298M615.5 301V304M615.5 307V310M615.5 313V316M615.5 319V322M615.5 325V328M615.5 331V334M615.5 337V340M615.5 343V346M615.5 349V352M615.5 355V358M615.5 361V364M615.5 367V370M615.5 373V376" stroke="#778899" stroke-width="1" fill="none"/>
<path d="M615.5 381V382M615.5 385V388M615.5 391V394M615.5 397V400M615.5 403V406M615.5 409V412M615.5 415V418M615.5 421V424M615.5 427V430M615.5 433V436M615.5 439V442M615.5 445V448M615.5 451V454M615.5 457V460M615.5 463V466M615.5 469V472M615.5 475V478M615.5 481V484M615.5 487V490M615.5 493V496M615.5 499V502M615.5 505V508M615.5 511V514M615.5 517V520M615.5 523V526M615.5 529V532M615.5 535V538M615.5 541V544M615.5 547V550M615.5 553V555" stroke="#778899" stroke-width="1" fill="none"/>
<path d="M647.5 31V34M647.5 37V40M647.5 43V46M647.5 49V52M647.5 55V58M647.5 61V64M647.5 67V70M647.5 73V76M647.5 79V82M647.5 85V88M647.5 91V94M647.5 97V100M647.5 103V106M647.5 109V112M647.5 115V118M647.5 121V124M647.5 127V130M647.5 133V136M647.5 139V142M647.5 145V148M647.5 151V154M647.5 157V160M647.5 163V166M647.5 169V172M647.5 175V178M647.5 181V184M647.5 187V190M647.5 193V196M647.5 199V202M647.5 205V208M647.5 211V214M647.5 217V220M647.5 223V226M647.5 229V232M647.5 235V238M647.5 241V244M647.5 247V250M647.5 253V256M647.5 259V262M647.5 265V268M647.5 271V274M647.5 277V280M647.5 283V286M647.5 289V292M647.5 295V298M647.5 301V304M647.5 307V310M647.5 313V316M647.5 319V322M647.5 325V328M647.5 331V334M647.5 337V340M647.5 343V346M647.5 349V352M647.5 355V358M647.5 361V364M647.5 367V370M647.5 373V376" stroke="#778899" stroke-width="1" fill="none"/>
<path d="M647.5 381V382M647.5 385V388M647.5 391V394M647.5 397V400M647.5 403V406M647.5 409V412M647.5 415V418M647.5 421V424M647.5 427V430M647.5 433V436M647.5 439V442M647.5 445V448M647.5 451V454M647.5 457V460M647.5 463V466M647.5 469V472M647.5 475V478M647.5 481V484M647.5 487V490M647.5 493V496M647.5 499V502M647.5 505V508M647.5 511V514M647.5 517V520M647.5 523V526M647.5 529V532M647.5 535V538M647.5 541V544M647.5 547V550M647.5 553V555" stroke="#778899" stroke-width="1" fill="none"/>
<path d="M15.5 31V34M15.5 37V40M15.5 43V46M15.5 49V52M15.5 55V58M15.5 61V64M15.5 67V70M15.5 73V76M15.5 79V82M15.5 85V88M15.5 91V94M15.5 97V100M15.5 103V106M15.5 109V112M15.5 115V118M15.5 121V124M15.5 127V130M15.5 133V136M15.5 139V142M15.5 145V148M15.5 151V154M15.5 157V160M15.5 163V166M15.5 169V172M15.5 175V178M15.5 181V184M15.5 187V190M15.5 193V196M15.5 199V202M15.5 205V208M15.5 211V214M15.5 217V220M15.5 223V226M15.5 229V232M15.5 235V238M15.5 241V244M15.5 247V250M15.5 253V256M15.5 259V262M15.5 265V268M15.5 271V274M15.5 277V280M15.5 283V286M15.5 289V292M15.5 295V298M15.5 301V304M15.5 307V310M15.5 313V316M15.5 319V322M15.5 325V328M15.5 331V334M15.5 337V340M15.5 343V346M15.5 349V352M15.5 355V358M15.5 361V364M15.5 367V370M15.5 373V376" stroke="#ffffff" stroke-width="1" fill="none"/>
<path d="M15.5 381V382M15.5 385V388M15.5 391V394M15.5 397V400M15.5 403V406M15.5 409V412M15.5 415V418M15.5 421V424M15.5 427V430M15.5 433V436M15.5 439V442M15.5 445V448M15.5 451V454M15.5 457V460M15.5 463V466M15.5 469V472M15.5 475V478M15.5 481V484M15.5 487V490M15.5 493V496M15.5 499V502M15.5 505V508M15.5 511V514M15.5 517V520M15.5 523V526M15.5 529V532M15.5 535V538M15.5 541V544M15.5 547V550M15.5 553V555" stroke="#ffffff" stroke-width="1" fill="none"/>
<path d="M207.5 31V34M207.5 37V40M207.5 43V46M207.5 49V52M207.5 55V58M207.5 61V64M207.5 67V70M207.5 73V76M207.5 79V82M207.5 85V88M207.5 91V94M207.5 97V100M207.5 103V106M207.5 109V112M207.5 115V118M207.5 121V124M207.5 127V130M207.5 133V136M207.5 139V142M207.5 145V148M207.5 151V154M207.5 157V160M207.5 163V166M207.5 169V172M207.5 175V178M207.5 181V184M207.5 187V190M207.5 193V196M207.5 199V202M207.5 205V208M207.5 211V214M207.5 217V220M207.5 223V226M207.5 229V232M207.5 235V238M207.5 241V244M207.5 247V250M207.5 253V256M207.5 259V262M207.5 265V268M207.5 271V274M207.5 277V280M207.5 283V286M207.5 289V292M207.5 295V298M207.5 301V304M207.5 307V310M207.5 313V316M207.5 319V322M207.5 325V328M207.5 331V334M207.5 337V340M207.5 343V346M207.5 349V352M207.5 355V358M207.5 361V364M207.5 367V370M207.5 373V376" stroke="#ffffff" stroke-width="1" fill="none"/>
<path d="M207.5 381V382M207.5 385V388M207.5 391V394M207.5 397V400M207.5 403V406M207.5 409V412M207.5 415V418M207.5 421V424M207.5 427V430M207.5 433V436M207.5 439V442M207.5 445V448M207.5 451V454M207.5 457V460M207.5 463V466M207.5 469V472M207.5 475V478M207.5 481V484M207.5 487V490M207.5 493V496M207.5 499V502M207.5 505V508M207.5 511V514M207.5 517V520M207.5 523V526M207.5 529V532M207.5 535V538M207.5 541V544M207.5 547V550M207.5 553V555" stroke="#ffffff" stroke-width="1" fill="none"/>
<path d="M399.5 31V34M399.5 37V40M399.5 43V46M399.5 49V52M399.5 55V58M399.5 61V64M399.5 67V70M399.5 73V76M399.5 79V82M399.5 85V88M399.5 91V94M399.5 97V100M399.5 103V106M399.5 109V112M399.5 115V118M399.5 121V124M399.5 127V130M399.5 133V136M399.5 139V142M399.5 145V148M399.5 151V154M399.5 157V160M399.5 163V166M399.5 169V172M399.5 175V178M399.5 181V184M399.5 187V190M399.5 193V196M399.5 199V202M399.5 205V208M399.5 211V214M399.5 217V220M399.5 223V226M399.5 229V232M399.5 235V238M399.5 241V244M399.5 247V250M399.5 253V256M399.5 259V262M399.5 265V268M399.5 271V274M399.5 277V280M399.5 283V286M399.5 289V292M399.5 295V298M399.5 301V304M399.5 307V310M399.5 313V316M399.5 319V322M399.5 325V328M399.5 331V334M399.5 337V340M399.5 343V346M399.5 349V352M399.5 355V358M399.5 361V364M399.5 367V370M399.5 373V376" stroke="#ffffff" stroke-width="1" fill="none"/>
<path d="M399.5 381V382M399.5 385V388M399.5 391V394M399.5 397V400M399.5 403V406M399.5 409V412M399.5 415V418M399.5 421V424M399.5 427V430M399.5 433V436M399.5 439V442M399.5 445V448M399.5 451V454M399.5 457V460M399.5 463V466M399.5 469V472M399.5 475V478M399.5 481V484M399.5 487V490M399.5 493V496M399.5 499V502M399.5 505V508M399.5 511V514M399.5 517V520M399.5 523V526M399.5 529V532M399.5 535V538M399.5 541V544M399.5 547V550M399.5 553V555" stroke="#ffffff" stroke-width="1" fill="none"/>
<path d="M591.5 31V34M591.5 37V40M591.5 43V46M591.5 49V52M591.5 55V58M591.5 61V64M591.5 67V70M591.5 73V76M591.5 79V82M591.5 85V88M591.5 91V94M591.5 97V100M591.5 103V106M591.5 109V112M591.5 115V118M591.5 121V124M591.5 127V130M591.5 133V136M591.5 139V142M591.5 145V148M591.5 151V154M591.5 157V160M591.5 163V166M591.5 169V172M591.5 175V178M591.5 181V184M591.5 187V190M591.5 193V196M591.5 199V202M591.5 205V208M591.5 211V214M591.5 217V220M591.5 223V226M591.5 229V232M591.5 235V238M591.5 241V244M591.5 247V250M591.5 253V256M591.5 259V262M591.5 265V268M591.5 271V274M591.5 277V280M591.5 283V286M591.5 289V292M591.5 295V298M591.5 301V304M591.5 307V310M591.5 313V316M591.5 319V322M591.5 325V328M591.5 331V334M591.5 337V340M591.5 343V346M591.5 349V352M591.5 355V358M591.5 361V364M591.5 367V370M591.5 373V376" stroke="#ffffff" stroke-width="1" fill="none"/>
<path d="M591.5 381V382M591.5 385V388M591.5 391V394M591.5 397V400M591.5 403V406M591.5 409V412M591.5 415V418M591.5 421V424M591.5 427V430M591.5 433V436M591.5 439V442M591.5 445V448M591.5 451V454M591.5 457V460M591.5 463V466M591.5 469V472M591.5 475V478M591.5 481V484M591.5 487V490M591.5 493V496M591.5 499V502M591.5 505V508M591.5 511V514M591.5 517V520M591.5 523V526M591.5 529V532M591.5 535V538M591.5 541V544M591.5 547V550M591.5 553V555" stroke="#ffffff" stroke-width="1" fill="none"/>
</g>
<g clip-path="url(#cm)" shape-rendering="crispEdges">
<rect x="7" y="351" width="1" height="8" fill="#00ff00"/>
<rect x="5" y="353" width="5" height="4" fill="#00ff00"/>
<rect x="6" y="354" width="3" height="2" fill="#000000"/>
<rect x="15" y="358" width="1" height="12" fill="#00ff00"/>
<rect x="13" y="365" width="5" height="5" fill="#00ff00"/>
<rect x="14" y="366" width="3" height="3" fill="#ffffff"/>
<rect x="23" y="356" width="1" height="14" fill="#00ff00"/>
<rect x="21" y="358" width="5" height="12" fill="#00ff00"/>
<rect x="22" y="359" width="3" height="10" fill="#000000"/>
<rect x="31" y="352" width="1" height="13" fill="#00ff00"/>
<rect x="29" y="359" width="5" height="2" fill="#00ff00"/>
<rect x="39" y="329" width="1" height="39" fill="#00ff00"/>
<rect x="37" y="337" width="5" height="24" fill="#00ff00"/>
<rect x="38" y="338" width="3" height="22" fill="#000000"/>
<rect x="47" y="331" width="1" height="15" fill="#00ff00"/>
<rect x="45" y="337" width="5" height="3" fill="#00ff00"/>
<rect x="46" y="338" width="3" height="1" fill="#ffffff"/>
<rect x="55" y="335" width="1" height="10" fill="#00ff00"/>
<rect x="53" y="337" width="5" height="3" fill="#00ff00"/>
<rect x="54" y="338" width="3" height="1" fill="#000000"/>
<rect x="63" y="323" width="1" height="17" fill="#00ff00"/>
<rect x="61" y="324" width="5" height="14" fill="#00ff00"/>
<rect x="62" y="325" width="3" height="12" fill="#000000"/>
<rect x="71" y="311" width="1" height="14" fill="#00ff00"/>
<rect x="69" y="319" width="5" height="6" fill="#00ff00"/>
<rect x="70" y="320" width="3" height="4" fill="#000000"/>
<rect x="79" y="314" width="1" height="19" fill="#00ff00"/>
<rect x="77" y="319" width="5" height="5" fill="#00ff00"/>
<rect x="78" y="320" width="3" height="3" fill="#ffffff"/>
<rect x="87" y="292" width="1" height="34" fill="#00ff00"/>
<rect x="85" y="299" width="5" height="25" fill="#00ff00"/>
<rect x="86" y="300" width="3" height="23" fill="#000000"/>
<rect x="95" y="293" width="1" height="14" fill="#00ff00"/>
<rect x="93" y="299" width="5" height="3" fill="#00ff00"/>
<rect x="94" y="300" width="3" height="1" fill="#ffffff"/>
<rect x="103" y="267" width="1" height="39" fill="#00ff00"/>
<rect x="101" y="271" width="5" height="30" fill="#00ff00"/>
<rect x="102" y="272" width="3" height="28" fill="#000000"/>
<rect x="111" y="260" width="1" height="19" fill="#00ff00"/>
<rect x="109" y="269" width="5" height="3" fill="#00ff00"/>
<rect x="110" y="270" width="3" height="1" fill="#000000"/>
<rect x="119" y="250" width="1" height="20" fill="#00ff00"/>
<rect x="117" y="253" width="5" height="17" fill="#00ff00"/>
<rect x="118" y="254" width="3" height="15" fill="#000000"/>
<rect x="127" y="237" width="1" height="20" fill="#00ff00"/>
<rect x="125" y="239" width="5" height="15" fill="#00ff00"/>
<rect x="126" y="240" width="3" height="13" fill="#000000"/>
<rect x="135" y="210" width="1" height="41" fill="#00ff00"/>
<rect x="133" y="217" width="5" height="23" fill="#00ff00"/>
<rect x="134" y="218" width="3" height="21" fill="#000000"/>
<rect x="143" y="202" width="1" height="23" fill="#00ff00"/>
<rect x="141" y="211" width="5" height="6" fill="#00ff00"/>
<rect x="142" y="212" width="3" height="4" fill="#000000"/>
<rect x="151" y="202" width="1" height="26" fill="#00ff00"/>
<rect x="149" y="211" width="5" height="2" fill="#00ff00"/>
<rect x="159" y="202" width="1" height="12" fill="#00ff00"/>
<rect x="157" y="211" width="5" height="2" fill="#00ff00"/>
<rect x="167" y="200" width="1" height="15" fill="#00ff00"/>
<rect x="165" y="204" width="5" height="8" fill="#00ff00"/>
<rect x="166" y="205" width="3" height="6" fill="#000000"/>
<rect x="175" y="203" width="1" height="11" fill="#00ff00"/>
<rect x="173" y="204" width="5" height="4" fill="#00ff00"/>
<rect x="174" y="205" width="3" height="2" fill="#ffffff"/>
<rect x="183" y="189" width="1" height="19" fill="#00ff00"/>
<rect x="181" y="193" width="5" height="15" fill="#00ff00"/>
<rect x="182" y="194" width="3" height="13" fill="#000000"/>
<rect x="191" y="187" width="1" height="8" fill="#00ff00"/>
<rect x="189" y="191" width="5" height="3" fill="#00ff00"/>
<rect x="190" y="192" width="3" height="1" fill="#000000"/>
<rect x="199" y="184" width="1" height="9" fill="#00ff00"/>
<rect x="197" y="185" width="5" height="7" fill="#00ff00"/>
<rect x="198" y="186" width="3" height="5" fill="#000000"/>
<rect x="207" y="187" width="1" height="25" fill="#00ff00"/>
<rect x="205" y="187" width="5" height="16" fill="#00ff00"/>
<rect x="206" y="188" width="3" height="14" fill="#ffffff"/>
<rect x="215" y="192" width="1" height="11" fill="#00ff00"/>
<rect x="213" y="198" width="5" height="5" fill="#00ff00"/>
<rect x="214" y="199" width="3" height="3" fill="#000000"/>
<rect x="223" y="194" width="1" height="16" fill="#00ff00"/>
<rect x="221" y="198" width="5" height="4" fill="#00ff00"/>
<rect x="222" y="199" width="3" height="2" fill="#ffffff"/>
<rect x="231" y="200" width="1" height="32" fill="#00ff00"/>
<rect x="229" y="201" width="5" height="30" fill="#00ff00"/>
<rect x="230" y="202" width="3" height="28" fill="#ffffff"/>
<rect x="239" y="191" width="1" height="41" fill="#00ff00"/>
<rect x="237" y="205" width="5" height="25" fill="#00ff00"/>
<rect x="238" y="206" width="3" height="23" fill="#000000"/>
<rect x="247" y="204" width="1" height="21" fill="#00ff00"/>
<rect x="245" y="205" width="5" height="1" fill="#00ff00"/>
<rect x="255" y="202" width="1" height="17" fill="#00ff00"/>
<rect x="253" y="205" width="5" height="12" fill="#00ff00"/>
<rect x="254" y="206" width="3" height="10" fill="#ffffff"/>
<rect x="263" y="212" width="1" height="15" fill="#00ff00"/>
<rect x="261" y="216" width="5" height="10" fill="#00ff00"/>
<rect x="262" y="217" width="3" height="8" fill="#ffffff"/>
<rect x="271" y="197" width="1" height="30" fill="#00ff00"/>
<rect x="269" y="198" width="5" height="28" fill="#00ff00"/>
<rect x="270" y="199" width="3" height="26" fill="#000000"/>
<rect x="279" y="190" width="1" height="19" fill="#00ff00"/>
<rect x="277" y="197" width="5" height="5" fill="#00ff00"/>
<rect x="278" y="198" width="3" height="3" fill="#ffffff"/>
<rect x="287" y="195" width="1" height="28" fill="#00ff00"/>
<rect x="285" y="196" width="5" height="7" fill="#00ff00"/>
<rect x="286" y="197" width="3" height="5" fill="#000000"/>
<rect x="295" y="195" width="1" height="23" fill="#00ff00"/>
<rect x="293" y="196" width="5" height="12" fill="#00ff00"/>
<rect x="294" y="197" width="3" height="10" fill="#ffffff"/>
<rect x="303" y="197" width="1" height="19" fill="#00ff00"/>
<rect x="301" y="200" width="5" height="8" fill="#00ff00"/>
<rect x="302" y="201" width="3" height="6" fill="#000000"/>
<rect x="311" y="199" width="1" height="11" fill="#00ff00"/>
<rect x="309" y="199" width="5" height="2" fill="#00ff00"/>
<rect x="319" y="186" width="1" height="14" fill="#00ff00"/>
<rect x="317" y="194" width="5" height="6" fill="#00ff00"/>
<rect x="318" y="195" width="3" height="4" fill="#000000"/>
<rect x="327" y="124" width="1" height="77" fill="#00ff00"/>
<rect x="325" y="139" width="5" height="57" fill="#00ff00"/>
<rect x="326" y="140" width="3" height="55" fill="#000000"/>
<rect x="335" y="108" width="1" height="45" fill="#00ff00"/>
<rect x="333" y="114" width="5" height="26" fill="#00ff00"/>
<rect x="334" y="115" width="3" height="24" fill="#000000"/>
<rect x="343" y="86" width="1" height="41" fill="#00ff00"/>
<rect x="341" y="86" width="5" height="29" fill="#00ff00"/>
<rect x="342" y="87" width="3" height="27" fill="#000000"/>
<rect x="351" y="59" width="1" height="30" fill="#00ff00"/>
<rect x="349" y="66" width="5" height="21" fill="#00ff00"/>
<rect x="350" y="67" width="3" height="19" fill="#000000"/>
<rect x="359" y="56" width="1" height="22" fill="#00ff00"/>
<rect x="357" y="62" width="5" height="5" fill="#00ff00"/>
<rect x="358" y="63" width="3" height="3" fill="#000000"/>
<rect x="367" y="48" width="1" height="23" fill="#00ff00"/>
<rect x="365" y="62" width="5" height="3" fill="#00ff00"/>
<rect x="366" y="63" width="3" height="1" fill="#ffffff"/>
<rect x="375" y="48" width="1" height="27" fill="#00ff00"/>
<rect x="373" y="53" width="5" height="12" fill="#00ff00"/>
<rect x="374" y="54" width="3" height="10" fill="#000000"/>
<rect x="383" y="51" width="1" height="24" fill="#00ff00"/>
<rect x="381" y="53" width="5" height="16" fill="#00ff00"/>
<rect x="382" y="54" width="3" height="14" fill="#ffffff"/>
<rect x="391" y="63" width="1" height="10" fill="#00ff00"/>
<rect x="389" y="66" width="5" height="3" fill="#00ff00"/>
<rect x="390" y="67" width="3" height="1" fill="#000000"/>
<rect x="399" y="63" width="1" height="13" fill="#00ff00"/>
<rect x="397" y="67" width="5" height="7" fill="#00ff00"/>
<rect x="398" y="68" width="3" height="5" fill="#ffffff"/>
<rect x="407" y="64" width="1" height="11" fill="#00ff00"/>
<rect x="405" y="73" width="5" height="1" fill="#00ff00"/>
<rect x="415" y="43" width="1" height="12" fill="#00ff00"/>
<rect x="413" y="54" width="5" height="20" fill="#00ff00"/>
<rect x="414" y="55" width="3" height="18" fill="#000000"/>
<rect x="423" y="44" width="1" height="44" fill="#00ff00"/>
<rect x="421" y="55" width="5" height="26" fill="#00ff00"/>
<rect x="422" y="56" width="3" height="24" fill="#ffffff"/>
<rect x="431" y="58" width="1" height="30" fill="#00ff00"/>
<rect x="429" y="61" width="5" height="20" fill="#00ff00"/>
<rect x="430" y="62" width="3" height="18" fill="#000000"/>
<rect x="439" y="60" width="1" height="20" fill="#00ff00"/>
<rect x="437" y="61" width="5" height="15" fill="#00ff00"/>
<rect x="438" y="62" width="3" height="13" fill="#ffffff"/>
<rect x="447" y="72" width="1" height="11" fill="#00ff00"/>
<rect x="445" y="75" width="5" height="3" fill="#00ff00"/>
<rect x="446" y="76" width="3" height="1" fill="#ffffff"/>
<rect x="455" y="73" width="1" height="14" fill="#00ff00"/>
<rect x="453" y="77" width="5" height="10" fill="#00ff00"/>
<rect x="454" y="78" width="3" height="8" fill="#ffffff"/>
<rect x="463" y="75" width="1" height="15" fill="#00ff00"/>
<rect x="461" y="76" width="5" height="10" fill="#00ff00"/>
<rect x="462" y="77" width="3" height="8" fill="#000000"/>
<rect x="471" y="65" width="1" height="15" fill="#00ff00"/>
<rect x="469" y="75" width="5" height="1" fill="#00ff00"/>
<rect x="479" y="53" width="1" height="23" fill="#00ff00"/>
<rect x="477" y="58" width="5" height="18" fill="#00ff00"/>
<rect x="478" y="59" width="3" height="16" fill="#000000"/>
<rect x="487" y="58" width="1" height="30" fill="#00ff00"/>
<rect x="485" y="58" width="5" height="14" fill="#00ff00"/>
<rect x="486" y="59" width="3" height="12" fill="#ffffff"/>
<rect x="495" y="65" width="1" height="12" fill="#00ff00"/>
<rect x="493" y="66" width="5" height="6" fill="#00ff00"/>
<rect x="494" y="67" width="3" height="4" fill="#000000"/>
<rect x="503" y="44" width="1" height="24" fill="#00ff00"/>
<rect x="501" y="52" width="5" height="15" fill="#00ff00"/>
<rect x="502" y="53" width="3" height="13" fill="#000000"/>
<rect x="511" y="51" width="1" height="20" fill="#00ff00"/>
<rect x="509" y="52" width="5" height="15" fill="#00ff00"/>
<rect x="510" y="53" width="3" height="13" fill="#ffffff"/>
<rect x="519" y="62" width="1" height="32" fill="#00ff00"/>
<rect x="517" y="66" width="5" height="23" fill="#00ff00"/>
<rect x="518" y="67" width="3" height="21" fill="#ffffff"/>
<rect x="527" y="67" width="1" height="37" fill="#00ff00"/>
<rect x="525" y="73" width="5" height="16" fill="#00ff00"/>
<rect x="526" y="74" width="3" height="14" fill="#000000"/>
<rect x="535" y="73" width="1" height="38" fill="#00ff00"/>
<rect x="533" y="73" width="5" height="32" fill="#00ff00"/>
<rect x="534" y="74" width="3" height="30" fill="#ffffff"/>
<rect x="543" y="95" width="1" height="21" fill="#00ff00"/>
<rect x="541" y="102" width="5" height="3" fill="#00ff00"/>
<rect x="542" y="103" width="3" height="1" fill="#000000"/>
<rect x="551" y="92" width="1" height="15" fill="#00ff00"/>
<rect x="549" y="98" width="5" height="5" fill="#00ff00"/>
<rect x="550" y="99" width="3" height="3" fill="#000000"/>
<rect x="559" y="97" width="1" height="12" fill="#00ff00"/>
<rect x="557" y="98" width="5" height="5" fill="#00ff00"/>
<rect x="558" y="99" width="3" height="3" fill="#ffffff"/>
<rect x="567" y="98" width="1" height="21" fill="#00ff00"/>
<rect x="565" y="102" width="5" height="12" fill="#00ff00"/>
<rect x="566" y="103" width="3" height="10" fill="#ffffff"/>
<rect x="575" y="97" width="1" height="17" fill="#00ff00"/>
<rect x="573" y="104" width="5" height="10" fill="#00ff00"/>
<rect x="574" y="105" width="3" height="8" fill="#000000"/>
<rect x="583" y="97" width="1" height="12" fill="#00ff00"/>
<rect x="581" y="104" width="5" height="1" fill="#00ff00"/>
<rect x="591" y="108" width="1" height="14" fill="#00ff00"/>
<rect x="589" y="109" width="5" height="8" fill="#00ff00"/>
<rect x="590" y="110" width="3" height="6" fill="#000000"/>
<rect x="599" y="102" width="1" height="20" fill="#00ff00"/>
<rect x="597" y="109" width="5" height="1" fill="#00ff00"/>
<rect x="607" y="108" width="1" height="20" fill="#00ff00"/>
<rect x="605" y="109" width="5" height="8" fill="#00ff00"/>
<rect x="606" y="110" width="3" height="6" fill="#ffffff"/>
<rect x="615" y="116" width="1" height="41" fill="#00ff00"/>
<rect x="613" y="116" width="5" height="33" fill="#00ff00"/>
<rect x="614" y="117" width="3" height="31" fill="#ffffff"/>
<rect x="623" y="134" width="1" height="36" fill="#00ff00"/>
<rect x="621" y="148" width="5" height="13" fill="#00ff00"/>
<rect x="622" y="149" width="3" height="11" fill="#ffffff"/>
<rect x="631" y="159" width="1" height="28" fill="#00ff00"/>
<rect x="629" y="160" width="5" height="21" fill="#00ff00"/>
<rect x="630" y="161" width="3" height="19" fill="#ffffff"/>
<rect x="639" y="177" width="1" height="12" fill="#00ff00"/>
<rect x="637" y="180" width="5" height="2" fill="#00ff00"/>
<rect x="647" y="174" width="1" height="14" fill="#00ff00"/>
<rect x="645" y="179" width="5" height="3" fill="#00ff00"/>
<rect x="646" y="180" width="3" height="1" fill="#000000"/>
<rect x="655" y="175" width="1" height="32" fill="#00ff00"/>
<rect x="653" y="179" width="5" height="23" fill="#00ff00"/>
<rect x="654" y="180" width="3" height="21" fill="#ffffff"/>
<rect x="663" y="192" width="1" height="20" fill="#00ff00"/>
<rect x="661" y="195" width="5" height="7" fill="#00ff00"/>
<rect x="662" y="196" width="3" height="5" fill="#000000"/>
<rect x="671" y="194" width="1" height="43" fill="#00ff00"/>
<rect x="669" y="195" width="5" height="35" fill="#00ff00"/>
<rect x="670" y="196" width="3" height="33" fill="#ffffff"/>
</g>
<g clip-path="url(#cm)">
<polygon points="39.50,367.00 37.72,370.62 33.09,370.10 35.95,373.20 33.09,376.30 37.72,375.78 39.50,379.40 41.28,375.78 45.91,376.30 43.05,373.20 45.91,370.10 41.28,370.62" fill="#ee82ee"/>
<polygon points="48,347 58.5,358 56.5,360.5 49.5,353.5 49.5,369 46.5,369 46.5,353.5 39.5,360.5 37.5,358" fill="#ee82ee"/>
<polygon points="519.50,49.80 517.72,53.42 513.09,52.90 515.95,56.00 513.09,59.10 517.72,58.58 519.50,62.20 521.28,58.58 525.91,59.10 523.05,56.00 525.91,52.90 521.28,53.42" fill="#c8c8c8"/>
<polygon points="528.5,58 538.5,47.5 537,45 530,52 530,37 527,37 527,52 520,45 518.5,47.5" fill="#c8c8c8"/>
</g>
<rect x="8" y="382" width="150" height="15" fill="#000000"/>
<g clip-path="url(#ci)" shape-rendering="crispEdges">
<polyline points="7,526 15,530 23,524 31,510 39,468 47,428 55,427 63,422.5 71,410 79,403 87,403 95,403 103,403 111,399 119,399 127,399 135,399 143,398.5 151,398 159,398 167,398 175,399 183,399 191,399 199,399 207,406.7 215,418.3 223,436 231,481.5 239,506.3 247,541.3 255,541.8 263,537.6 271,490.2 279,479.5 287,440.4 295,436.4 303,443.8 311,438.4 319,426 327,424.5 335,423.7 343,406.7 351,404.3 359,397.7 367,397.7 375,397.7 383,412.1 391,422.2 399,446 407,487.1 415,493.8 423,518.4 431,497.2 439,512.8 447,509.4 455,522.6 463,522.6 471,514.2 479,485.7 487,447.2 495,454.1 503,415.6 511,412 519,454.1 527,474.5 535,508.8 543,538 551,538.8 559,541.6 567,543 575,534.7 583,532 591,529.8 599,525.1 607,538.8 615,541.6 623,541.6 631,544.3 639,554 647,550.7 655,550.7 663,549.8 671,550.7" stroke="#ff0000" stroke-width="2" fill="none" stroke-linejoin="round"/>
<polyline points="7,490 15,495.2 23,500.9 31,506.4 39,502 47,497.7 55,494.6 63,488 71,474.5 79,465.5 87,453.5 95,440.3 103,433.3 111,428 119,426.5 127,424.5 135,420.3 143,416 151,409.8 159,406.7 167,403.6 175,400.5 183,398.2 191,397.7 199,397.7 207,397.7 215,397.7 223,399 231,403.6 239,405.1 247,407.4 255,412.7 263,420.6 271,421.4 279,424.5 287,426.5 295,432.2 303,435.3 311,439.2 319,441 327,441 335,440.8 343,440.7 351,436.9 359,435.3 367,434.8 375,429.9 383,429.9 391,421.4 399,415.6 407,410.2 415,408.7 423,407.1 431,407.1 439,410.7 447,413.4 455,417.4 463,423 471,428.2 479,429.4 487,433.5 495,437.6 503,437.6 511,444.5 519,456.9 527,466.2 535,483 543,499 551,514.1 559,519.6 567,522.3 575,523.7 583,525.1 591,527.8 599,530.2 607,535.4 615,538.8 623,540.2 631,543 639,544.3 647,547.1 655,548.5 663,549.8 671,551.8" stroke="#00ffff" stroke-width="2" fill="none" stroke-linejoin="round"/>
<polyline points="7,540 15,540.4 23,540.8 31,540.4 39,538.2 47,536 55,533 63,527.3 71,521.1 79,514.2 87,507.2 95,499.5 103,492.5 111,482 119,473.2 127,466.2 135,460.3 143,453.8 151,448.5 159,443.1 167,437.75 175,433.5 183,428.4 191,425.1 199,421.4 207,420.3 215,418.7 223,416.7 231,415.2 239,414.4 247,413.6 255,412.3 263,412.1 271,411.3 279,410.1 287,409 295,407.9 303,407 311,405.9 319,405.9 327,405.9 335,405.9 343,405.1 351,404.8 359,404.3 367,403.6 375,403.3 383,402.8 391,402.8 399,402.7 407,402.7 415,402.7 423,402.7 431,402.7 439,403.5 447,404.5 455,404.6 463,405 471,405.5 479,406.5 487,407.4 495,407.8 503,408 511,408.2 519,409.5 527,411.5 535,412.9 543,414.3 551,417 559,419.8 567,422.5 575,425 583,428 591,431 599,433.3 607,436.4 615,440 623,444.8 631,448.8 639,453.5 647,459 655,465.5 663,472.7 671,481" stroke="#ffff00" stroke-width="2" fill="none" stroke-linejoin="round"/>
</g>
<g shape-rendering="crispEdges">
<path d="M7 397.5H10M13 397.5H16M19 397.5H22M25 397.5H28M31 397.5H34M37 397.5H40M43 397.5H46M49 397.5H52M55 397.5H58M61 397.5H64M67 397.5H70M73 397.5H76M79 397.5H82M85 397.5H88M91 397.5H94M97 397.5H100M103 397.5H106M109 397.5H112M115 397.5H118M121 397.5H124M127 397.5H130M133 397.5H136M139 397.5H142M145 397.5H148M151 397.5H154M157 397.5H160M163 397.5H166M169 397.5H172M175 397.5H178M181 397.5H184M187 397.5H190M193 397.5H196M199 397.5H202M205 397.5H208M211 397.5H214M217 397.5H220M223 397.5H226M229 397.5H232M235 397.5H238M241 397.5H244M247 397.5H250M253 397.5H256M259 397.5H262M265 397.5H268M271 397.5H274M277 397.5H280M283 397.5H286M289 397.5H292M295 397.5H298M301 397.5H304M307 397.5H310M313 397.5H316M319 397.5H322M325 397.5H328M331 397.5H334M337 397.5H340M343 397.5H346M349 397.5H352M355 397.5H358M361 397.5H364M367 397.5H370M373 397.5H376M379 397.5H382M385 397.5H388M391 397.5H394M397 397.5H400M403 397.5H406M409 397.5H412M415 397.5H418M421 397.5H424M427 397.5H430M433 397.5H436M439 397.5H442M445 397.5H448M451 397.5H454M457 397.5H460M463 397.5H466M469 397.5H472M475 397.5H478M481 397.5H484M487 397.5H490M493 397.5H496M499 397.5H502M505 397.5H508M511 397.5H514M517 397.5H520M523 397.5H526M529 397.5H532M535 397.5H538M541 397.5H544M547 397.5H550M553 397.5H556M559 397.5H562M565 397.5H568M571 397.5H574M577 397.5H580M583 397.5H586M589 397.5H592M595 397.5H598M601 397.5H604M607 397.5H610M613 397.5H616M619 397.5H622M625 397.5H628M631 397.5H634M637 397.5H640M643 397.5H646M649 397.5H652M655 397.5H658M661 397.5H664M667 397.5H670M673 397.5H676" stroke="#778899" stroke-width="1" fill="none"/>
<path d="M7 413.5H10M13 413.5H16M19 413.5H22M25 413.5H28M31 413.5H34M37 413.5H40M43 413.5H46M49 413.5H52M55 413.5H58M61 413.5H64M67 413.5H70M73 413.5H76M79 413.5H82M85 413.5H88M91 413.5H94M97 413.5H100M103 413.5H106M109 413.5H112M115 413.5H118M121 413.5H124M127 413.5H130M133 413.5H136M139 413.5H142M145 413.5H148M151 413.5H154M157 413.5H160M163 413.5H166M169 413.5H172M175 413.5H178M181 413.5H184M187 413.5H190M193 413.5H196M199 413.5H202M205 413.5H208M211 413.5H214M217 413.5H220M223 413.5H226M229 413.5H232M235 413.5H238M241 413.5H244M247 413.5H250M253 413.5H256M259 413.5H262M265 413.5H268M271 413.5H274M277 413.5H280M283 413.5H286M289 413.5H292M295 413.5H298M301 413.5H304M307 413.5H310M313 413.5H316M319 413.5H322M325 413.5H328M331 413.5H334M337 413.5H340M343 413.5H346M349 413.5H352M355 413.5H358M361 413.5H364M367 413.5H370M373 413.5H376M379 413.5H382M385 413.5H388M391 413.5H394M397 413.5H400M403 413.5H406M409 413.5H412M415 413.5H418M421 413.5H424M427 413.5H430M433 413.5H436M439 413.5H442M445 413.5H448M451 413.5H454M457 413.5H460M463 413.5H466M469 413.5H472M475 413.5H478M481 413.5H484M487 413.5H490M493 413.5H496M499 413.5H502M505 413.5H508M511 413.5H514M517 413.5H520M523 413.5H526M529 413.5H532M535 413.5H538M541 413.5H544M547 413.5H550M553 413.5H556M559 413.5H562M565 413.5H568M571 413.5H574M577 413.5H580M583 413.5H586M589 413.5H592M595 413.5H598M601 413.5H604M607 413.5H610M613 413.5H616M619 413.5H622M625 413.5H628M631 413.5H634M637 413.5H640M643 413.5H646M649 413.5H652M655 413.5H658M661 413.5H664M667 413.5H670M673 413.5H676" stroke="#778899" stroke-width="1" fill="none"/>
<path d="M7 476.5H10M13 476.5H16M19 476.5H22M25 476.5H28M31 476.5H34M37 476.5H40M43 476.5H46M49 476.5H52M55 476.5H58M61 476.5H64M67 476.5H70M73 476.5H76M79 476.5H82M85 476.5H88M91 476.5H94M97 476.5H100M103 476.5H106M109 476.5H112M115 476.5H118M121 476.5H124M127 476.5H130M133 476.5H136M139 476.5H142M145 476.5H148M151 476.5H154M157 476.5H160M163 476.5H166M169 476.5H172M175 476.5H178M181 476.5H184M187 476.5H190M193 476.5H196M199 476.5H202M205 476.5H208M211 476.5H214M217 476.5H220M223 476.5H226M229 476.5H232M235 476.5H238M241 476.5H244M247 476.5H250M253 476.5H256M259 476.5H262M265 476.5H268M271 476.5H274M277 476.5H280M283 476.5H286M289 476.5H292M295 476.5H298M301 476.5H304M307 476.5H310M313 476.5H316M319 476.5H322M325 476.5H328M331 476.5H334M337 476.5H340M343 476.5H346M349 476.5H352M355 476.5H358M361 476.5H364M367 476.5H370M373 476.5H376M379 476.5H382M385 476.5H388M391 476.5H394M397 476.5H400M403 476.5H406M409 476.5H412M415 476.5H418M421 476.5H424M427 476.5H430M433 476.5H436M439 476.5H442M445 476.5H448M451 476.5H454M457 476.5H460M463 476.5H466M469 476.5H472M475 476.5H478M481 476.5H484M487 476.5H490M493 476.5H496M499 476.5H502M505 476.5H508M511 476.5H514M517 476.5H520M523 476.5H526M529 476.5H532M535 476.5H538M541 476.5H544M547 476.5H550M553 476.5H556M559 476.5H562M565 476.5H568M571 476.5H574M577 476.5H580M583 476.5H586M589 476.5H592M595 476.5H598M601 476.5H604M607 476.5H610M613 476.5H616M619 476.5H622M625 476.5H628M631 476.5H634M637 476.5H640M643 476.5H646M649 476.5H652M655 476.5H658M661 476.5H664M667 476.5H670M673 476.5H676" stroke="#778899" stroke-width="1" fill="none"/>
<path d="M7 539.5H10M13 539.5H16M19 539.5H22M25 539.5H28M31 539.5H34M37 539.5H40M43 539.5H46M49 539.5H52M55 539.5H58M61 539.5H64M67 539.5H70M73 539.5H76M79 539.5H82M85 539.5H88M91 539.5H94M97 539.5H100M103 539.5H106M109 539.5H112M115 539.5H118M121 539.5H124M127 539.5H130M133 539.5H136M139 539.5H142M145 539.5H148M151 539.5H154M157 539.5H160M163 539.5H166M169 539.5H172M175 539.5H178M181 539.5H184M187 539.5H190M193 539.5H196M199 539.5H202M205 539.5H208M211 539.5H214M217 539.5H220M223 539.5H226M229 539.5H232M235 539.5H238M241 539.5H244M247 539.5H250M253 539.5H256M259 539.5H262M265 539.5H268M271 539.5H274M277 539.5H280M283 539.5H286M289 539.5H292M295 539.5H298M301 539.5H304M307 539.5H310M313 539.5H316M319 539.5H322M325 539.5H328M331 539.5H334M337 539.5H340M343 539.5H346M349 539.5H352M355 539.5H358M361 539.5H364M367 539.5H370M373 539.5H376M379 539.5H382M385 539.5H388M391 539.5H394M397 539.5H400M403 539.5H406M409 539.5H412M415 539.5H418M421 539.5H424M427 539.5H430M433 539.5H436M439 539.5H442M445 539.5H448M451 539.5H454M457 539.5H460M463 539.5H466M469 539.5H472M475 539.5H478M481 539.5H484M487 539.5H490M493 539.5H496M499 539.5H502M505 539.5H508M511 539.5H514M517 539.5H520M523 539.5H526M529 539.5H532M535 539.5H538M541 539.5H544M547 539.5H550M553 539.5H556M559 539.5H562M565 539.5H568M571 539.5H574M577 539.5H580M583 539.5H586M589 539.5H592M595 539.5H598M601 539.5H604M607 539.5H610M613 539.5H616M619 539.5H622M625 539.5H628M631 539.5H634M637 539.5H640M643 539.5H646M649 539.5H652M655 539.5H658M661 539.5H664M667 539.5H670M673 539.5H676" stroke="#778899" stroke-width="1" fill="none"/>
</g>
<g shape-rendering="crispEdges" fill="#ffffff">
<rect x="7" y="31" width="672" height="1" fill="#fff"/>
<rect x="7" y="379" width="672" height="1" fill="#fff"/>
<rect x="7" y="31" width="1" height="349" fill="#fff"/>
<rect x="678" y="31" width="1" height="349" fill="#fff"/>
<rect x="7" y="381" width="672" height="1" fill="#fff"/>
<rect x="7" y="555" width="672" height="1" fill="#fff"/>
<rect x="7" y="381" width="1" height="175" fill="#fff"/>
<rect x="678" y="381" width="1" height="175" fill="#fff"/>
<rect x="679" y="57" width="4" height="1" fill="#fff"/>
<rect x="679" y="89" width="4" height="1" fill="#fff"/>
<rect x="679" y="121" width="4" height="1" fill="#fff"/>
<rect x="679" y="153" width="4" height="1" fill="#fff"/>
<rect x="679" y="186" width="4" height="1" fill="#fff"/>
<rect x="679" y="218" width="4" height="1" fill="#fff"/>
<rect x="679" y="250" width="4" height="1" fill="#fff"/>
<rect x="679" y="282" width="4" height="1" fill="#fff"/>
<rect x="679" y="315" width="4" height="1" fill="#fff"/>
<rect x="679" y="347" width="4" height="1" fill="#fff"/>
<rect x="679" y="382" width="4" height="1" fill="#fff"/>
<rect x="679" y="397" width="4" height="1" fill="#fff"/>
<rect x="679" y="413" width="4" height="1" fill="#fff"/>
<rect x="679" y="476" width="4" height="1" fill="#fff"/>
<rect x="679" y="539" width="4" height="1" fill="#fff"/>
<rect x="679" y="554" width="4" height="1" fill="#fff"/>
<rect x="7" y="556" width="1" height="4" fill="#fff"/>
<rect x="71" y="556" width="1" height="4" fill="#fff"/>
<rect x="135" y="556" width="1" height="4" fill="#fff"/>
<rect x="199" y="556" width="1" height="4" fill="#fff"/>
<rect x="263" y="556" width="1" height="4" fill="#fff"/>
<rect x="327" y="556" width="1" height="4" fill="#fff"/>
<rect x="391" y="556" width="1" height="4" fill="#fff"/>
<rect x="455" y="556" width="1" height="4" fill="#fff"/>
<rect x="519" y="556" width="1" height="4" fill="#fff"/>
<rect x="583" y="556" width="1" height="4" fill="#fff"/>
<rect x="647" y="556" width="1" height="4" fill="#fff"/>
</g>
<!-- header icons -->
<g shape-rendering="crispEdges">
<rect x="12" y="37" width="8" height="11" fill="#e02020"/>
<rect x="19" y="37" width="8" height="11" fill="#1060b8"/>
<rect x="13" y="38" width="6" height="9" fill="#ffdcdc"/>
<rect x="19" y="38" width="7" height="9" fill="#cfe6ff"/>
<rect x="14" y="39" width="5" height="1" fill="#e02020"/>
<rect x="14" y="42" width="5" height="1" fill="#e02020"/>
<rect x="14" y="45" width="5" height="1" fill="#e02020"/>
<rect x="19" y="39" width="6" height="1" fill="#1060b8"/>
<rect x="19" y="42" width="6" height="1" fill="#1060b8"/>
<rect x="19" y="45" width="6" height="1" fill="#1060b8"/>
<path d="M33 37H38V40H40V48H33Z" fill="#e02020"/>
<path d="M34 38H37V41H39V47H34Z" fill="#ffd8d0"/>
<path d="M41 42H44V37H48V48H41Z" fill="#1a6cc0"/>
<path d="M42 43H45V38H47V47H42Z" fill="#bfe0ff"/>
<rect x="38" y="37" width="5" height="3" fill="#909090"/>
<rect x="39" y="38" width="3" height="1" fill="#e8e8e8"/>
</g>
<g class="ax">
<text transform="translate(684,61) scale(0.89,1)">149.860</text>
<text transform="translate(684,93) scale(0.89,1)">149.620</text>
<text transform="translate(684,125) scale(0.89,1)">149.380</text>
<text transform="translate(684,157) scale(0.89,1)">149.140</text>
<text transform="translate(684,190) scale(0.89,1)">148.900</text>
<text transform="translate(684,222) scale(0.89,1)">148.660</text>
<text transform="translate(684,254) scale(0.89,1)">148.420</text>
<text transform="translate(684,286) scale(0.89,1)">148.180</text>
<text transform="translate(684,319) scale(0.89,1)">147.940</text>
<text transform="translate(684,351) scale(0.89,1)">147.700</text>
<text transform="translate(684,390) scale(0.89,1)">120.00</text>
<text transform="translate(684,401) scale(0.89,1)">100.00</text>
<text transform="translate(684,417) scale(0.89,1)">80.00</text>
<text transform="translate(684,480) scale(0.89,1)">0.00</text>
<text transform="translate(684,543) scale(0.89,1)">-80.00</text>
<text transform="translate(684,553) scale(0.89,1)">-100.00</text>
<text transform="translate(7,568) scale(0.917,1)">23 Sep 2025</text>
<text transform="translate(71,568) scale(0.917,1)">24 Sep 07:00</text>
<text transform="translate(135,568) scale(0.917,1)">24 Sep 15:00</text>
<text transform="translate(199,568) scale(0.917,1)">24 Sep 23:00</text>
<text transform="translate(263,568) scale(0.917,1)">25 Sep 07:00</text>
<text transform="translate(327,568) scale(0.917,1)">25 Sep 15:00</text>
<text transform="translate(391,568) scale(0.917,1)">25 Sep 23:00</text>
<text transform="translate(455,568) scale(0.917,1)">26 Sep 07:00</text>
<text transform="translate(519,568) scale(0.917,1)">26 Sep 15:00</text>
<text transform="translate(583,568) scale(0.917,1)">26 Sep 23:00</text>
<text transform="translate(647,568) scale(0.917,1)">29 Sep 07:00</text>
<g class="hd">
<text transform="translate(53.5,46) scale(0.972,1)">USDJPY, H1:&#160; US Dollar vs Japanese Yen</text>
<text transform="translate(12,61) scale(0.939,1)">Authentication success : by GogoJungle</text>
<text transform="translate(10.5,394) scale(0.968,1)">RCI(9,26,52) -46.67 -21.61 -83.44</text>
</g>
</g>
<!-- window buttons -->
<g shape-rendering="crispEdges" fill="none" stroke="#000" stroke-width="1">
<path d="M635 20.5H645"/>
<rect x="671.5" y="12.5" width="8" height="8"/>
</g>
<path d="M707 12L716.5 21.5M716.5 12L707 21.5" stroke="#000" stroke-width="1.1" fill="none"/>
</svg>
<div id="title">USDJPY,H1</div>
</body></html>
